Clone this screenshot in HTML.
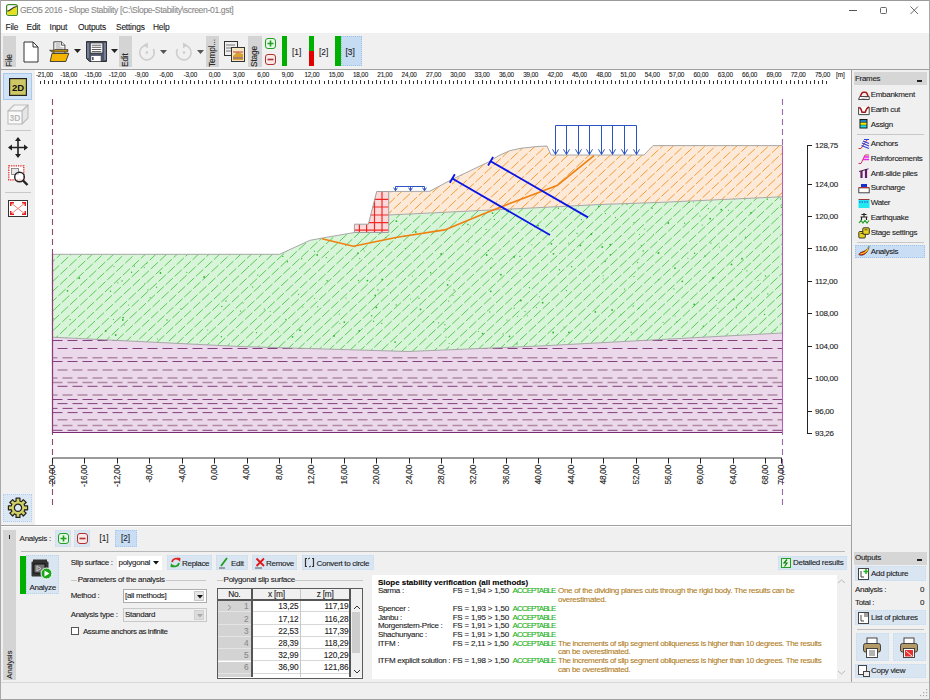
<!DOCTYPE html><html><head><meta charset="utf-8"><style>
html,body{margin:0;padding:0;}
body{width:930px;height:700px;overflow:hidden;position:relative;background:#f0f0f0;font-family:"Liberation Sans", sans-serif;}
.t{position:absolute;white-space:nowrap;line-height:1.2;-webkit-text-stroke:0.1px currentColor;}
.b{position:absolute;box-sizing:border-box;}
svg{position:absolute;overflow:visible;}

</style></head><body>
<div class="b" style="left:0px;top:0px;width:930px;height:33px;background:#fff;"></div>
<div class="b" style="left:0px;top:0px;width:930px;height:1px;background:#9a9a9a;"></div>
<svg style="left:5.5px;top:4px" width="12" height="12"><rect x="0.6" y="0.6" width="10.8" height="10.8" rx="2" fill="#fff" stroke="#3f8a2a" stroke-width="1.2"/><path d="M1.2 7 C4 7.5 6 3 10.8 2.5 V10.8 H1.2 Z" fill="#e4e020"/><path d="M1.2 7 C4 7.5 6 3 10.8 2.5" stroke="#333" fill="none" stroke-width="1.2"/></svg>
<div class="t" style="left:20px;top:5.3px;font-size:8.6px;color:#8a8a8a;letter-spacing:-0.35px;">GEO5 2016 - Slope Stability [C:\Slope-Stability\screen-01.gst]</div>
<div class="b" style="left:849px;top:10px;width:8px;height:1px;background:#555;"></div>
<div class="b" style="left:879.5px;top:6.5px;width:7.5px;height:7.5px;border:1px solid #666;border-radius:1.5px;"></div>
<svg style="left:910px;top:6px" width="9" height="9"><path d="M0.5 0.5 L8 8 M8 0.5 L0.5 8" stroke="#555" stroke-width="0.9"/></svg>
<div class="t" style="left:5.5px;top:22.3px;font-size:8.4px;color:#1a1a1a;letter-spacing:-0.2px;">File</div>
<div class="t" style="left:26.5px;top:22.3px;font-size:8.4px;color:#1a1a1a;letter-spacing:-0.2px;">Edit</div>
<div class="t" style="left:49.5px;top:22.3px;font-size:8.4px;color:#1a1a1a;letter-spacing:-0.2px;">Input</div>
<div class="t" style="left:78px;top:22.3px;font-size:8.4px;color:#1a1a1a;letter-spacing:-0.2px;">Outputs</div>
<div class="t" style="left:116px;top:22.3px;font-size:8.4px;color:#1a1a1a;letter-spacing:-0.2px;">Settings</div>
<div class="t" style="left:153px;top:22.3px;font-size:8.4px;color:#1a1a1a;letter-spacing:-0.2px;">Help</div>
<div class="b" style="left:0px;top:33px;width:930px;height:36px;background:#f0f0f0;"></div>
<div class="b" style="left:0px;top:69px;width:930px;height:1px;background:#a0a0a0;"></div>
<div class="b" style="left:3px;top:36px;width:13px;height:31px;background:#d4d4d4;"></div>
<div class="t" style="left:9.5px;top:67px;font-size:8.3px;color:#1a1a1a;letter-spacing:-0.15px;transform-origin:0 0;transform:rotate(-90deg) translate(0,-5px);">File</div>
<div class="b" style="left:119px;top:36px;width:13px;height:31px;background:#d4d4d4;"></div>
<div class="t" style="left:125.5px;top:67px;font-size:8.3px;color:#1a1a1a;letter-spacing:-0.15px;transform-origin:0 0;transform:rotate(-90deg) translate(0,-5px);">Edit</div>
<div class="b" style="left:206px;top:36px;width:13px;height:31px;background:#d4d4d4;"></div>
<div class="t" style="left:212.5px;top:67px;font-size:8.3px;color:#1a1a1a;letter-spacing:-0.15px;transform-origin:0 0;transform:rotate(-90deg) translate(0,-5px);">Templ...</div>
<div class="b" style="left:248px;top:36px;width:14px;height:31px;background:#d4d4d4;"></div>
<div class="t" style="left:255.0px;top:67px;font-size:8.3px;color:#1a1a1a;letter-spacing:-0.15px;transform-origin:0 0;transform:rotate(-90deg) translate(0,-5px);">Stage</div>
<svg style="left:23px;top:41px" width="16" height="22"><path d="M1 1 H10 L15 6 V21 H1 Z" fill="#fff" stroke="#333" stroke-width="1"/><path d="M10 1 V6 H15" fill="none" stroke="#333"/></svg>
<svg style="left:49px;top:41px" width="22" height="22"><path d="M4.8 0.8 H12.5 L15.9 4.2 V12.8 H4.8 Z" fill="#fff" stroke="#333" stroke-width="0.9"/><path d="M12.5 0.8 V4.2 H15.9" fill="#eee" stroke="#333" stroke-width="0.8"/><path d="M6.5 3h5M6.5 5h5M6.5 7h8M6.5 9h8" stroke="#999" stroke-width="1"/><path d="M0.6 9.3 H5 L6 8.6 H19 L18.5 11 H3 Z" fill="#c89000" stroke="#333" stroke-width="0.8"/><path d="M3 12.4 H19.8 L16.8 20.5 H1.2 Z" fill="#f5b400" stroke="#333" stroke-width="0.9"/></svg>
<svg style="left:74px;top:49px" width="7" height="5"><path d="M0 0 H7 L3.5 4 Z" fill="#222"/></svg>
<svg style="left:86px;top:41px" width="22" height="22"><path d="M0.5 0.5 H20.5 V20.5 H3.5 L0.5 17.5 Z" fill="#4d5566" stroke="#222" stroke-width="0.9"/><path d="M2 2v15M19 2v17" stroke="#8a96b4" stroke-width="1.3"/><rect x="4.3" y="2" width="12.5" height="10" fill="#fff" stroke="#222" stroke-width="0.6"/><path d="M5.8 4.2h9.5M5.8 6.3h9.5M5.8 8.5h9.5M5.8 10.6h9.5" stroke="#333" stroke-width="0.8"/><rect x="5.2" y="14.9" width="9.5" height="5.3" fill="#fff"/><rect x="6" y="16" width="1.6" height="3" fill="#4d5566"/></svg>
<svg style="left:111px;top:49px" width="7" height="5"><path d="M0 0 H7 L3.5 4 Z" fill="#222"/></svg>
<svg style="left:138px;top:42px" width="20" height="20"><path d="M9.2 3.3 A7.3 7.3 0 1 0 15.3 7" fill="none" stroke="#cdcdcd" stroke-width="1.6"/><path d="M5 3.3 L9.8 0.4 L9.8 6.2 Z" fill="#cdcdcd"/><circle cx="8.8" cy="10.6" r="1.3" fill="#cdcdcd"/></svg>
<svg style="left:160px;top:50px" width="7" height="5"><path d="M0 0 H7 L3.5 4 Z" fill="#555"/></svg>
<svg style="left:175px;top:42px" width="20" height="20"><path d="M8.6 3.3 A7.3 7.3 0 1 1 2.5 7" fill="none" stroke="#cdcdcd" stroke-width="1.6"/><path d="M12.8 3.3 L8 0.4 L8 6.2 Z" fill="#cdcdcd"/><circle cx="9" cy="10.6" r="1.3" fill="#cdcdcd"/></svg>
<svg style="left:197px;top:50px" width="7" height="5"><path d="M0 0 H7 L3.5 4 Z" fill="#555"/></svg>
<svg style="left:224px;top:41px" width="22" height="22"><rect x="0.5" y="0.5" width="13" height="14" fill="#eee" stroke="#333"/><path d="M2 4h9M2 7h9M2 10h6" stroke="#777"/><rect x="7.5" y="6.5" width="13" height="14" fill="#f4e6c0" stroke="#333"/><path d="M9 15 L13 11 L19 13 V19 H9 Z" fill="#d8a030"/><path d="M9 11h10" stroke="#c04040"/><path d="M9 17h10" stroke="#8060a0"/></svg>
<svg style="left:265px;top:38px" width="11" height="11"><rect x="0.5" y="0.5" width="10" height="10" rx="2.5" fill="#e8f8e8" stroke="#20a020"/><path d="M5.5 2.5v6M2.5 5.5h6" stroke="#20a020" stroke-width="1.6"/></svg>
<svg style="left:265px;top:54px" width="11" height="11"><rect x="0.5" y="0.5" width="10" height="10" rx="2.5" fill="#f8e8e8" stroke="#b03030"/><path d="M2.5 5.5h6" stroke="#b03030" stroke-width="1.6"/></svg>
<div class="b" style="left:282px;top:36px;width:5px;height:30px;background:#00b000;"></div>
<div class="t" style="left:292px;top:46.5px;font-size:8.4px;color:#222;letter-spacing:0px;">[1]</div>
<div class="b" style="left:309px;top:36px;width:5px;height:15px;background:#00b000;"></div>
<div class="b" style="left:309px;top:51px;width:5px;height:15px;background:#e00000;"></div>
<div class="t" style="left:319px;top:46.5px;font-size:8.4px;color:#222;letter-spacing:0px;">[2]</div>
<div class="b" style="left:341px;top:36px;width:21px;height:30px;background:#c5dcf2;border:1px dotted #9cc2ea;"></div>
<div class="b" style="left:335px;top:36px;width:6px;height:30px;background:#00b000;"></div>
<div class="t" style="left:345.5px;top:46.5px;font-size:8.4px;color:#222;letter-spacing:0px;">[3]</div>
<div class="b" style="left:0px;top:70px;width:35px;height:455px;background:#f0f0f0;"></div>
<div class="b" style="left:3px;top:73px;width:29px;height:27px;background:#cfe2f6;border:1px solid #a8c8ec;"></div>
<svg style="left:9px;top:77.5px" width="18" height="18"><rect x="0.6" y="0.6" width="16.8" height="16.8" fill="#cdc865" stroke="#222" stroke-width="1.2"/><text x="9" y="12.8" text-anchor="middle" font-family="Liberation Sans" font-weight="bold" font-size="9.5" fill="#111">2D</text></svg>
<svg style="left:7px;top:104px" width="23" height="21"><path d="M1 7 L7 1 H21 L15 7 Z" fill="#f4f4f4" stroke="#bdbdbd" stroke-width="1.1" stroke-linejoin="round"/><path d="M15 7 L21 1 V14 L15 20 Z" fill="#e6e6e6" stroke="#bdbdbd" stroke-width="1.1" stroke-linejoin="round"/><rect x="1" y="7" width="14" height="13" fill="#fafafa" stroke="#bdbdbd" stroke-width="1.1"/><text x="8" y="17.2" text-anchor="middle" font-family="Liberation Sans" font-weight="bold" font-size="8.5" fill="#b8b8b8">3D</text></svg>
<div class="b" style="left:5px;top:130px;width:26px;height:1px;background:#c8c8c8;"></div>
<svg style="left:8px;top:137px" width="20" height="21"><path d="M10 1 V20 M1 10.5 H19" stroke="#222" stroke-width="1.6"/><path d="M10 0 L7 4 H13 Z M10 21 L7 17 H13 Z M0 10.5 L4 7.5 V13.5 Z M20 10.5 L16 7.5 V13.5 Z" fill="#222"/></svg>
<svg style="left:8px;top:165px" width="21" height="22"><rect x="0.8" y="0.8" width="15" height="14" fill="#fff" stroke="#e02020" stroke-width="1.3" stroke-dasharray="1.3 1"/><rect x="3.5" y="3.5" width="7" height="6" fill="#e8e8e8" stroke="#777" stroke-width="0.8"/><circle cx="11.5" cy="12" r="4.8" fill="#fff" fill-opacity="0.6" stroke="#222" stroke-width="1.4"/><path d="M15 15.5 L19.5 20" stroke="#222" stroke-width="2.4"/></svg>
<div class="b" style="left:5px;top:192px;width:26px;height:1px;background:#c8c8c8;"></div>
<svg style="left:8px;top:200px" width="20" height="17"><rect x="0.5" y="0.5" width="19" height="16" fill="#fff" stroke="#333"/><path d="M3 3 L17 14 M17 3 L3 14" stroke="#f08080" stroke-width="1"/><path d="M2 2h4v1.5h-2.5v2.5h-1.5z M18 2h-4v1.5h2.5v2.5h1.5z M2 15h4v-1.5h-2.5v-2.5h-1.5z M18 15h-4v-1.5h2.5v-2.5h1.5z" fill="#e02020"/></svg>
<div class="b" style="left:3px;top:494px;width:29px;height:28px;background:#dbe7f3;border:1px dotted #b0d0f0;"></div>
<svg style="left:0;top:0" width="40" height="530"><path d="M24.7 505.9 L27.6 505.8 L27.6 509.8 L24.7 509.7 L24.5 510.5 L24.1 511.3 L26.2 513.1 L23.3 516.0 L21.5 513.9 L20.7 514.3 L19.9 514.5 L20.0 517.4 L16.0 517.4 L16.1 514.5 L15.3 514.3 L14.5 513.9 L12.7 516.0 L9.8 513.1 L11.9 511.3 L11.5 510.5 L11.3 509.7 L8.4 509.8 L8.4 505.8 L11.3 505.9 L11.5 505.1 L11.9 504.3 L9.8 502.5 L12.7 499.6 L14.5 501.7 L15.3 501.3 L16.1 501.1 L16.0 498.2 L20.0 498.2 L19.9 501.1 L20.7 501.3 L21.5 501.7 L23.3 499.6 L26.2 502.5 L24.1 504.3 L24.5 505.1 Z M21.6 507.8 A3.6 3.6 0 1 0 14.4 507.8 A3.6 3.6 0 1 0 21.6 507.8 Z" fill="#d2d064" stroke="#222" stroke-width="1.2" stroke-linejoin="round" fill-rule="evenodd"/></svg>
<div class="b" style="left:35px;top:70px;width:816px;height:455px;background:#fff;"></div>
<div class="b" style="left:851px;top:70px;width:1px;height:612px;background:#a0a0a0;"></div>
<svg style="left:0;top:0" width="930" height="700">
<defs><pattern id="pg" patternUnits="userSpaceOnUse" width="12" height="39.50" patternTransform="rotate(-46)"><rect x="-1" y="-1" width="14" height="41.50" fill="#d9f5d9"/><path d="M-12.00 3.95H-2.70M0.00 3.95H9.30M-7.50 11.85H1.80M4.50 11.85H13.80M-2.20 19.75H7.10M9.80 19.75H19.10M-5.50 27.65H3.80M6.50 27.65H15.80M-10.00 35.55H-0.70M2.00 35.55H11.30" stroke="#5ecf5e" stroke-width="1.0"/></pattern><pattern id="po" patternUnits="userSpaceOnUse" width="12" height="39.50" patternTransform="rotate(-46)"><rect x="-1" y="-1" width="14" height="41.50" fill="#fde9d7"/><path d="M-12.00 3.95H-2.70M0.00 3.95H9.30M-7.50 11.85H1.80M4.50 11.85H13.80M-2.20 19.75H7.10M9.80 19.75H19.10M-5.50 27.65H3.80M6.50 27.65H15.80M-10.00 35.55H-0.70M2.00 35.55H11.30" stroke="#f39c3c" stroke-width="1.0"/></pattern><pattern id="pd" patternUnits="userSpaceOnUse" width="60" height="48"><circle cx="14.3" cy="26.1" r="0.9" fill="#28b828"/><circle cx="55.0" cy="22.8" r="1.1" fill="#28b828"/><circle cx="3.9" cy="0.6" r="0.9" fill="#28b828"/><circle cx="15.6" cy="11.2" r="1.1" fill="#28b828"/><circle cx="28.2" cy="40.2" r="0.9" fill="#28b828"/><circle cx="23.8" cy="41.3" r="0.7" fill="#28b828"/><circle cx="38.1" cy="41.7" r="1.1" fill="#28b828"/><circle cx="23.4" cy="0.7" r="0.7" fill="#28b828"/><circle cx="9.6" cy="46.0" r="0.7" fill="#28b828"/></pattern></defs>
<clipPath id="cg"><polygon points="52.5,254.3 279.6,254.3 309.7,240.4 322.5,238.0 354.4,232.5 388.7,232.5 388.7,215.0 422.0,213.4 520.0,208.6 600.0,204.5 660.0,202.4 782.0,196.8 782.0,432.5 52.5,432.5"/></clipPath>
<polygon points="52.5,254.3 279.6,254.3 309.7,240.4 322.5,238.0 354.4,232.5 388.7,232.5 388.7,215.0 422.0,213.4 520.0,208.6 600.0,204.5 660.0,202.4 782.0,196.8 782.0,432.5 52.5,432.5" fill="#d9f5d9"/>
<g clip-path="url(#cg)" stroke="#58ca58" stroke-width="1.0" stroke-dasharray="10 2.3" fill="none">
<line x1="-206.9" y1="434.5" x2="50.2" y2="194.8" stroke-dashoffset="9.1"/>
<line x1="-196.3" y1="434.5" x2="60.8" y2="194.8" stroke-dashoffset="9.8"/>
<line x1="-185.7" y1="434.5" x2="71.4" y2="194.8" stroke-dashoffset="11.6"/>
<line x1="-175.1" y1="434.5" x2="82.0" y2="194.8" stroke-dashoffset="9.1"/>
<line x1="-164.5" y1="434.5" x2="92.6" y2="194.8" stroke-dashoffset="11.3"/>
<line x1="-153.9" y1="434.5" x2="103.2" y2="194.8" stroke-dashoffset="0.4"/>
<line x1="-143.3" y1="434.5" x2="113.8" y2="194.8" stroke-dashoffset="5.7"/>
<line x1="-132.7" y1="434.5" x2="124.4" y2="194.8" stroke-dashoffset="11.6"/>
<line x1="-122.1" y1="434.5" x2="135.0" y2="194.8" stroke-dashoffset="8.0"/>
<line x1="-111.5" y1="434.5" x2="145.6" y2="194.8" stroke-dashoffset="11.1"/>
<line x1="-100.9" y1="434.5" x2="156.2" y2="194.8" stroke-dashoffset="1.4"/>
<line x1="-90.3" y1="434.5" x2="166.8" y2="194.8" stroke-dashoffset="5.8"/>
<line x1="-79.7" y1="434.5" x2="177.4" y2="194.8" stroke-dashoffset="3.0"/>
<line x1="-69.1" y1="434.5" x2="188.0" y2="194.8" stroke-dashoffset="6.7"/>
<line x1="-58.5" y1="434.5" x2="198.6" y2="194.8" stroke-dashoffset="7.1"/>
<line x1="-47.9" y1="434.5" x2="209.2" y2="194.8" stroke-dashoffset="0.2"/>
<line x1="-37.3" y1="434.5" x2="219.8" y2="194.8" stroke-dashoffset="2.7"/>
<line x1="-26.7" y1="434.5" x2="230.4" y2="194.8" stroke-dashoffset="3.4"/>
<line x1="-16.1" y1="434.5" x2="241.0" y2="194.8" stroke-dashoffset="11.3"/>
<line x1="-5.5" y1="434.5" x2="251.6" y2="194.8" stroke-dashoffset="9.4"/>
<line x1="5.1" y1="434.5" x2="262.2" y2="194.8" stroke-dashoffset="2.0"/>
<line x1="15.7" y1="434.5" x2="272.8" y2="194.8" stroke-dashoffset="9.8"/>
<line x1="26.3" y1="434.5" x2="283.4" y2="194.8" stroke-dashoffset="1.7"/>
<line x1="36.9" y1="434.5" x2="294.0" y2="194.8" stroke-dashoffset="7.6"/>
<line x1="47.5" y1="434.5" x2="304.6" y2="194.8" stroke-dashoffset="1.6"/>
<line x1="58.1" y1="434.5" x2="315.2" y2="194.8" stroke-dashoffset="0.0"/>
<line x1="68.7" y1="434.5" x2="325.8" y2="194.8" stroke-dashoffset="10.7"/>
<line x1="79.3" y1="434.5" x2="336.4" y2="194.8" stroke-dashoffset="2.6"/>
<line x1="89.9" y1="434.5" x2="347.0" y2="194.8" stroke-dashoffset="2.7"/>
<line x1="100.5" y1="434.5" x2="357.6" y2="194.8" stroke-dashoffset="12.1"/>
<line x1="111.1" y1="434.5" x2="368.2" y2="194.8" stroke-dashoffset="10.7"/>
<line x1="121.7" y1="434.5" x2="378.8" y2="194.8" stroke-dashoffset="3.6"/>
<line x1="132.3" y1="434.5" x2="389.4" y2="194.8" stroke-dashoffset="11.8"/>
<line x1="142.9" y1="434.5" x2="400.0" y2="194.8" stroke-dashoffset="6.6"/>
<line x1="153.5" y1="434.5" x2="410.6" y2="194.8" stroke-dashoffset="8.3"/>
<line x1="164.1" y1="434.5" x2="421.2" y2="194.8" stroke-dashoffset="2.5"/>
<line x1="174.7" y1="434.5" x2="431.8" y2="194.8" stroke-dashoffset="11.6"/>
<line x1="185.3" y1="434.5" x2="442.4" y2="194.8" stroke-dashoffset="8.5"/>
<line x1="195.9" y1="434.5" x2="453.0" y2="194.8" stroke-dashoffset="11.9"/>
<line x1="206.5" y1="434.5" x2="463.6" y2="194.8" stroke-dashoffset="11.0"/>
<line x1="217.1" y1="434.5" x2="474.2" y2="194.8" stroke-dashoffset="3.7"/>
<line x1="227.7" y1="434.5" x2="484.8" y2="194.8" stroke-dashoffset="4.4"/>
<line x1="238.3" y1="434.5" x2="495.4" y2="194.8" stroke-dashoffset="2.0"/>
<line x1="248.9" y1="434.5" x2="506.0" y2="194.8" stroke-dashoffset="1.8"/>
<line x1="259.5" y1="434.5" x2="516.6" y2="194.8" stroke-dashoffset="0.8"/>
<line x1="270.1" y1="434.5" x2="527.2" y2="194.8" stroke-dashoffset="3.7"/>
<line x1="280.7" y1="434.5" x2="537.8" y2="194.8" stroke-dashoffset="7.4"/>
<line x1="291.3" y1="434.5" x2="548.4" y2="194.8" stroke-dashoffset="0.0"/>
<line x1="301.9" y1="434.5" x2="559.0" y2="194.8" stroke-dashoffset="8.3"/>
<line x1="312.5" y1="434.5" x2="569.6" y2="194.8" stroke-dashoffset="4.2"/>
<line x1="323.1" y1="434.5" x2="580.2" y2="194.8" stroke-dashoffset="3.8"/>
<line x1="333.7" y1="434.5" x2="590.8" y2="194.8" stroke-dashoffset="10.1"/>
<line x1="344.3" y1="434.5" x2="601.4" y2="194.8" stroke-dashoffset="5.9"/>
<line x1="354.9" y1="434.5" x2="612.0" y2="194.8" stroke-dashoffset="3.9"/>
<line x1="365.5" y1="434.5" x2="622.6" y2="194.8" stroke-dashoffset="5.9"/>
<line x1="376.1" y1="434.5" x2="633.2" y2="194.8" stroke-dashoffset="8.7"/>
<line x1="386.7" y1="434.5" x2="643.8" y2="194.8" stroke-dashoffset="0.7"/>
<line x1="397.3" y1="434.5" x2="654.4" y2="194.8" stroke-dashoffset="12.0"/>
<line x1="407.9" y1="434.5" x2="665.0" y2="194.8" stroke-dashoffset="0.3"/>
<line x1="418.5" y1="434.5" x2="675.6" y2="194.8" stroke-dashoffset="9.2"/>
<line x1="429.1" y1="434.5" x2="686.2" y2="194.8" stroke-dashoffset="10.4"/>
<line x1="439.7" y1="434.5" x2="696.8" y2="194.8" stroke-dashoffset="0.2"/>
<line x1="450.3" y1="434.5" x2="707.4" y2="194.8" stroke-dashoffset="9.7"/>
<line x1="460.9" y1="434.5" x2="718.0" y2="194.8" stroke-dashoffset="4.5"/>
<line x1="471.5" y1="434.5" x2="728.6" y2="194.8" stroke-dashoffset="7.1"/>
<line x1="482.1" y1="434.5" x2="739.2" y2="194.8" stroke-dashoffset="0.1"/>
<line x1="492.7" y1="434.5" x2="749.8" y2="194.8" stroke-dashoffset="0.6"/>
<line x1="503.3" y1="434.5" x2="760.4" y2="194.8" stroke-dashoffset="2.2"/>
<line x1="513.9" y1="434.5" x2="771.0" y2="194.8" stroke-dashoffset="11.7"/>
<line x1="524.5" y1="434.5" x2="781.6" y2="194.8" stroke-dashoffset="2.4"/>
<line x1="535.1" y1="434.5" x2="792.2" y2="194.8" stroke-dashoffset="9.3"/>
<line x1="545.7" y1="434.5" x2="802.8" y2="194.8" stroke-dashoffset="11.4"/>
<line x1="556.3" y1="434.5" x2="813.4" y2="194.8" stroke-dashoffset="11.6"/>
<line x1="566.9" y1="434.5" x2="824.0" y2="194.8" stroke-dashoffset="4.2"/>
<line x1="577.5" y1="434.5" x2="834.6" y2="194.8" stroke-dashoffset="4.4"/>
<line x1="588.1" y1="434.5" x2="845.2" y2="194.8" stroke-dashoffset="6.5"/>
<line x1="598.7" y1="434.5" x2="855.8" y2="194.8" stroke-dashoffset="9.5"/>
<line x1="609.3" y1="434.5" x2="866.4" y2="194.8" stroke-dashoffset="1.3"/>
<line x1="619.9" y1="434.5" x2="877.0" y2="194.8" stroke-dashoffset="9.2"/>
<line x1="630.5" y1="434.5" x2="887.6" y2="194.8" stroke-dashoffset="9.8"/>
<line x1="641.1" y1="434.5" x2="898.2" y2="194.8" stroke-dashoffset="10.6"/>
<line x1="651.7" y1="434.5" x2="908.8" y2="194.8" stroke-dashoffset="0.5"/>
<line x1="662.3" y1="434.5" x2="919.4" y2="194.8" stroke-dashoffset="11.6"/>
<line x1="672.9" y1="434.5" x2="930.0" y2="194.8" stroke-dashoffset="1.1"/>
<line x1="683.5" y1="434.5" x2="940.6" y2="194.8" stroke-dashoffset="4.2"/>
<line x1="694.1" y1="434.5" x2="951.2" y2="194.8" stroke-dashoffset="7.5"/>
<line x1="704.7" y1="434.5" x2="961.8" y2="194.8" stroke-dashoffset="11.3"/>
<line x1="715.3" y1="434.5" x2="972.4" y2="194.8" stroke-dashoffset="4.2"/>
<line x1="725.9" y1="434.5" x2="983.0" y2="194.8" stroke-dashoffset="11.4"/>
<line x1="736.5" y1="434.5" x2="993.6" y2="194.8" stroke-dashoffset="6.7"/>
<line x1="747.1" y1="434.5" x2="1004.2" y2="194.8" stroke-dashoffset="3.8"/>
<line x1="757.7" y1="434.5" x2="1014.8" y2="194.8" stroke-dashoffset="3.9"/>
<line x1="768.3" y1="434.5" x2="1025.4" y2="194.8" stroke-dashoffset="2.2"/>
<line x1="778.9" y1="434.5" x2="1036.0" y2="194.8" stroke-dashoffset="1.0"/>
<line x1="789.5" y1="434.5" x2="1046.6" y2="194.8" stroke-dashoffset="1.8"/>
</g>
<g clip-path="url(#cg)" fill="#2cb82c">
<circle cx="382.2" cy="279.4" r="0.9"/>
<circle cx="381.8" cy="323.4" r="0.6"/>
<circle cx="186.8" cy="272.3" r="0.6"/>
<circle cx="120.7" cy="241.2" r="0.5"/>
<circle cx="445.2" cy="328.7" r="0.5"/>
<circle cx="486.7" cy="255.0" r="0.9"/>
<circle cx="529.4" cy="287.7" r="0.6"/>
<circle cx="506.9" cy="319.9" r="0.5"/>
<circle cx="95.5" cy="224.3" r="0.6"/>
<circle cx="489.7" cy="311.9" r="0.7"/>
<circle cx="373.6" cy="321.5" r="0.6"/>
<circle cx="519.4" cy="270.5" r="0.5"/>
<circle cx="385.9" cy="237.4" r="0.5"/>
<circle cx="568.7" cy="243.0" r="0.6"/>
<circle cx="426.4" cy="200.4" r="0.5"/>
<circle cx="344.3" cy="322.1" r="0.9"/>
<circle cx="100.8" cy="198.5" r="0.5"/>
<circle cx="207.9" cy="334.1" r="0.5"/>
<circle cx="395.1" cy="342.1" r="0.9"/>
<circle cx="358.4" cy="280.4" r="0.6"/>
<circle cx="620.3" cy="236.2" r="0.5"/>
<circle cx="279.2" cy="198.3" r="0.9"/>
<circle cx="605.4" cy="213.6" r="0.6"/>
<circle cx="568.1" cy="197.6" r="0.9"/>
<circle cx="633.8" cy="222.5" r="0.6"/>
<circle cx="378.6" cy="224.4" r="0.6"/>
<circle cx="358.0" cy="253.2" r="0.9"/>
<circle cx="359.2" cy="227.7" r="0.7"/>
<circle cx="683.0" cy="341.3" r="0.7"/>
<circle cx="780.5" cy="198.9" r="0.6"/>
<circle cx="339.8" cy="323.3" r="0.5"/>
<circle cx="82.7" cy="217.8" r="0.9"/>
<circle cx="240.5" cy="311.1" r="0.7"/>
<circle cx="658.1" cy="253.5" r="0.5"/>
<circle cx="117.8" cy="282.8" r="0.6"/>
<circle cx="63.3" cy="250.9" r="0.9"/>
<circle cx="144.9" cy="283.5" r="0.6"/>
<circle cx="684.6" cy="223.2" r="0.6"/>
<circle cx="278.9" cy="230.0" r="0.6"/>
<circle cx="581.5" cy="219.6" r="0.6"/>
<circle cx="553.5" cy="253.8" r="0.9"/>
<circle cx="492.6" cy="258.8" r="0.5"/>
<circle cx="131.6" cy="272.3" r="0.7"/>
<circle cx="226.0" cy="301.0" r="0.7"/>
<circle cx="359.2" cy="330.8" r="0.9"/>
<circle cx="266.2" cy="222.1" r="0.5"/>
<circle cx="144.3" cy="267.4" r="0.5"/>
<circle cx="256.6" cy="332.7" r="0.6"/>
<circle cx="598.8" cy="206.3" r="0.9"/>
<circle cx="377.4" cy="205.0" r="0.6"/>
<circle cx="257.8" cy="275.1" r="0.6"/>
<circle cx="119.3" cy="216.6" r="0.9"/>
<circle cx="767.8" cy="293.9" r="0.6"/>
<circle cx="482.6" cy="333.6" r="0.9"/>
<circle cx="716.5" cy="300.4" r="0.5"/>
<circle cx="67.5" cy="290.8" r="0.9"/>
<circle cx="101.1" cy="242.3" r="0.6"/>
<circle cx="781.5" cy="207.2" r="0.7"/>
<circle cx="590.0" cy="330.1" r="0.6"/>
<circle cx="631.1" cy="332.3" r="0.7"/>
<circle cx="114.0" cy="266.5" r="0.5"/>
<circle cx="687.9" cy="258.2" r="0.5"/>
<circle cx="682.3" cy="281.3" r="0.9"/>
<circle cx="328.8" cy="197.9" r="0.5"/>
<circle cx="110.5" cy="291.3" r="0.7"/>
<circle cx="694.2" cy="304.5" r="0.9"/>
<circle cx="734.0" cy="299.4" r="0.9"/>
<circle cx="373.6" cy="320.9" r="0.5"/>
<circle cx="430.6" cy="272.7" r="0.7"/>
<circle cx="490.9" cy="267.7" r="0.6"/>
<circle cx="750.9" cy="212.8" r="0.9"/>
<circle cx="238.8" cy="197.7" r="0.7"/>
<circle cx="156.6" cy="287.2" r="0.6"/>
<circle cx="602.3" cy="247.0" r="0.9"/>
<circle cx="415.8" cy="232.0" r="0.9"/>
<circle cx="538.1" cy="225.6" r="0.9"/>
<circle cx="638.7" cy="308.4" r="0.6"/>
<circle cx="694.6" cy="253.3" r="0.7"/>
<circle cx="205.2" cy="216.0" r="0.7"/>
<circle cx="663.1" cy="322.5" r="0.5"/>
<circle cx="745.5" cy="237.2" r="0.6"/>
<circle cx="134.4" cy="266.2" r="0.6"/>
<circle cx="658.6" cy="253.0" r="0.9"/>
<circle cx="542.7" cy="302.7" r="0.9"/>
<circle cx="285.9" cy="319.5" r="0.7"/>
<circle cx="689.2" cy="202.2" r="0.7"/>
<circle cx="468.5" cy="242.0" r="0.5"/>
<circle cx="519.9" cy="256.4" r="0.6"/>
<circle cx="70.1" cy="319.6" r="0.6"/>
<circle cx="620.9" cy="314.7" r="0.5"/>
<circle cx="377.9" cy="289.9" r="0.7"/>
<circle cx="751.7" cy="298.0" r="0.6"/>
<circle cx="653.4" cy="234.2" r="0.5"/>
<circle cx="603.2" cy="275.7" r="0.5"/>
<circle cx="182.7" cy="236.6" r="0.7"/>
<circle cx="446.0" cy="337.1" r="0.6"/>
<circle cx="339.3" cy="314.0" r="0.6"/>
<circle cx="115.7" cy="335.0" r="0.9"/>
<circle cx="146.8" cy="263.6" r="0.5"/>
<circle cx="327.1" cy="280.8" r="0.7"/>
<circle cx="390.5" cy="293.0" r="0.6"/>
<circle cx="124.2" cy="325.1" r="0.5"/>
<circle cx="207.7" cy="330.1" r="0.5"/>
<circle cx="765.5" cy="276.0" r="0.7"/>
<circle cx="243.2" cy="303.0" r="0.5"/>
<circle cx="306.4" cy="208.3" r="0.9"/>
<circle cx="301.7" cy="258.8" r="0.7"/>
<circle cx="407.8" cy="200.2" r="0.5"/>
<circle cx="365.1" cy="201.2" r="0.7"/>
<circle cx="553.2" cy="332.5" r="0.9"/>
<circle cx="160.5" cy="273.0" r="0.9"/>
<circle cx="742.4" cy="269.4" r="0.5"/>
<circle cx="605.2" cy="261.5" r="0.7"/>
<circle cx="658.7" cy="279.7" r="0.6"/>
<circle cx="433.6" cy="321.7" r="0.7"/>
<circle cx="279.5" cy="252.8" r="0.6"/>
<circle cx="274.3" cy="217.0" r="0.7"/>
<circle cx="470.3" cy="225.9" r="0.5"/>
<circle cx="419.3" cy="286.2" r="0.5"/>
<circle cx="445.0" cy="202.5" r="0.9"/>
<circle cx="449.1" cy="343.4" r="0.5"/>
<circle cx="410.5" cy="299.0" r="0.5"/>
<circle cx="731.5" cy="264.4" r="0.9"/>
<circle cx="248.5" cy="266.5" r="0.6"/>
<circle cx="300.0" cy="330.2" r="0.9"/>
<circle cx="435.2" cy="212.2" r="0.9"/>
<circle cx="503.1" cy="333.9" r="0.6"/>
<circle cx="564.5" cy="341.6" r="0.5"/>
<circle cx="193.7" cy="229.9" r="0.7"/>
<circle cx="287.1" cy="248.9" r="0.9"/>
<circle cx="128.6" cy="304.9" r="0.5"/>
<circle cx="673.9" cy="288.9" r="0.6"/>
<circle cx="564.0" cy="326.9" r="0.5"/>
<circle cx="326.3" cy="257.6" r="0.6"/>
<circle cx="444.9" cy="324.7" r="0.6"/>
<circle cx="438.6" cy="322.8" r="0.6"/>
<circle cx="221.8" cy="306.4" r="0.7"/>
<circle cx="711.0" cy="243.1" r="0.7"/>
<circle cx="702.2" cy="225.0" r="0.6"/>
<circle cx="699.9" cy="216.0" r="0.6"/>
<circle cx="148.8" cy="209.1" r="0.9"/>
<circle cx="122.8" cy="320.0" r="0.9"/>
<circle cx="448.6" cy="301.0" r="0.6"/>
<circle cx="346.0" cy="298.1" r="0.5"/>
<circle cx="122.1" cy="280.9" r="0.7"/>
<circle cx="717.3" cy="340.3" r="0.5"/>
<circle cx="566.4" cy="290.6" r="0.7"/>
<circle cx="419.0" cy="298.2" r="0.6"/>
<circle cx="638.1" cy="267.8" r="0.5"/>
<circle cx="79.3" cy="278.2" r="0.9"/>
<circle cx="159.0" cy="223.5" r="0.6"/>
<circle cx="177.9" cy="219.5" r="0.7"/>
<circle cx="728.6" cy="210.2" r="0.5"/>
<circle cx="150.1" cy="297.5" r="0.5"/>
<circle cx="610.2" cy="244.7" r="0.9"/>
<circle cx="363.3" cy="248.8" r="0.6"/>
<circle cx="490.7" cy="198.0" r="0.5"/>
<circle cx="668.3" cy="223.0" r="0.9"/>
<circle cx="314.5" cy="251.2" r="0.6"/>
<circle cx="493.6" cy="210.1" r="0.5"/>
<circle cx="288.3" cy="208.6" r="0.9"/>
<circle cx="467.9" cy="224.5" r="0.7"/>
<circle cx="639.5" cy="234.5" r="0.5"/>
<circle cx="595.4" cy="311.9" r="0.9"/>
<circle cx="149.2" cy="245.2" r="0.7"/>
<circle cx="612.1" cy="310.0" r="0.9"/>
<circle cx="203.0" cy="223.5" r="0.7"/>
<circle cx="272.2" cy="211.0" r="0.7"/>
<circle cx="775.1" cy="330.5" r="0.5"/>
<circle cx="221.4" cy="336.8" r="0.7"/>
<circle cx="298.6" cy="294.3" r="0.6"/>
<circle cx="441.1" cy="254.0" r="0.9"/>
<circle cx="520.9" cy="300.5" r="0.9"/>
<circle cx="767.5" cy="199.4" r="0.5"/>
<circle cx="591.3" cy="234.2" r="0.9"/>
<circle cx="420.5" cy="309.4" r="0.9"/>
<circle cx="59.9" cy="234.5" r="0.7"/>
<circle cx="713.1" cy="278.0" r="0.9"/>
<circle cx="758.0" cy="280.6" r="0.5"/>
<circle cx="517.7" cy="316.6" r="0.5"/>
<circle cx="453.1" cy="295.6" r="0.5"/>
<circle cx="334.1" cy="335.9" r="0.9"/>
<circle cx="396.4" cy="221.2" r="0.9"/>
<circle cx="447.6" cy="284.9" r="0.9"/>
<circle cx="742.0" cy="258.7" r="0.9"/>
<circle cx="488.4" cy="250.5" r="0.7"/>
<circle cx="404.8" cy="236.2" r="0.7"/>
<circle cx="536.4" cy="307.4" r="0.5"/>
<circle cx="62.2" cy="232.5" r="0.5"/>
<circle cx="514.1" cy="256.9" r="0.9"/>
<circle cx="90.5" cy="243.0" r="0.9"/>
<circle cx="88.6" cy="343.3" r="0.7"/>
<circle cx="105.7" cy="330.9" r="0.9"/>
<circle cx="577.0" cy="233.4" r="0.6"/>
<circle cx="85.2" cy="210.7" r="0.9"/>
<circle cx="157.4" cy="339.0" r="0.6"/>
<circle cx="492.6" cy="213.1" r="0.9"/>
<circle cx="384.7" cy="226.3" r="0.5"/>
<circle cx="312.4" cy="219.1" r="0.7"/>
<circle cx="375.3" cy="295.5" r="0.9"/>
<circle cx="490.8" cy="291.3" r="0.9"/>
<circle cx="317.7" cy="306.8" r="0.6"/>
<circle cx="747.4" cy="305.4" r="0.6"/>
<circle cx="403.2" cy="270.9" r="0.7"/>
<circle cx="624.5" cy="289.1" r="0.7"/>
<circle cx="252.6" cy="286.9" r="0.6"/>
<circle cx="514.2" cy="308.2" r="0.6"/>
<circle cx="746.9" cy="270.8" r="0.6"/>
<circle cx="693.5" cy="201.9" r="0.5"/>
<circle cx="58.9" cy="234.7" r="0.5"/>
<circle cx="507.0" cy="211.3" r="0.7"/>
<circle cx="104.9" cy="208.9" r="0.6"/>
<circle cx="454.0" cy="290.0" r="0.7"/>
<circle cx="405.3" cy="248.8" r="0.7"/>
<circle cx="302.9" cy="307.0" r="0.5"/>
<circle cx="637.6" cy="262.6" r="0.6"/>
<circle cx="376.4" cy="307.4" r="0.9"/>
<circle cx="643.2" cy="251.0" r="0.7"/>
<circle cx="264.3" cy="309.1" r="0.6"/>
<circle cx="364.2" cy="251.0" r="0.5"/>
<circle cx="389.3" cy="244.3" r="0.5"/>
<circle cx="367.4" cy="280.6" r="0.9"/>
<circle cx="270.2" cy="311.5" r="0.5"/>
<circle cx="278.4" cy="331.7" r="0.5"/>
<circle cx="559.4" cy="269.7" r="0.7"/>
<circle cx="258.5" cy="217.3" r="0.7"/>
<circle cx="531.8" cy="244.7" r="0.5"/>
<circle cx="287.4" cy="261.7" r="0.7"/>
<circle cx="371.7" cy="315.7" r="0.7"/>
<circle cx="386.5" cy="229.0" r="0.6"/>
<circle cx="113.5" cy="319.5" r="0.5"/>
<circle cx="317.2" cy="254.9" r="0.9"/>
<circle cx="633.2" cy="306.1" r="0.7"/>
<circle cx="633.9" cy="276.5" r="0.6"/>
<circle cx="180.9" cy="309.1" r="0.7"/>
<circle cx="644.7" cy="229.0" r="0.5"/>
<circle cx="449.2" cy="280.6" r="0.5"/>
<circle cx="527.4" cy="315.8" r="0.5"/>
<circle cx="476.8" cy="241.5" r="0.5"/>
<circle cx="296.2" cy="236.8" r="0.5"/>
<circle cx="708.3" cy="208.6" r="0.6"/>
<circle cx="123.1" cy="317.6" r="0.9"/>
<circle cx="231.2" cy="228.8" r="0.7"/>
<circle cx="610.2" cy="254.8" r="0.7"/>
<circle cx="641.3" cy="245.6" r="0.6"/>
<circle cx="412.4" cy="276.1" r="0.5"/>
<circle cx="568.9" cy="332.3" r="0.9"/>
<circle cx="604.6" cy="342.9" r="0.7"/>
<circle cx="675.1" cy="316.1" r="0.5"/>
<circle cx="700.7" cy="338.7" r="0.5"/>
<circle cx="434.4" cy="301.8" r="0.5"/>
<circle cx="359.8" cy="258.6" r="0.6"/>
<circle cx="231.4" cy="220.2" r="0.9"/>
<circle cx="551.4" cy="243.8" r="0.9"/>
<circle cx="362.2" cy="239.5" r="0.5"/>
<circle cx="396.2" cy="304.9" r="0.7"/>
<circle cx="525.0" cy="311.6" r="0.6"/>
<circle cx="717.9" cy="308.2" r="0.5"/>
<circle cx="478.4" cy="331.5" r="0.5"/>
<circle cx="280.2" cy="225.4" r="0.7"/>
<circle cx="210.7" cy="231.1" r="0.9"/>
<circle cx="486.2" cy="229.4" r="0.6"/>
<circle cx="705.0" cy="256.0" r="0.7"/>
<circle cx="509.5" cy="336.4" r="0.9"/>
<circle cx="675.0" cy="268.2" r="0.9"/>
<circle cx="719.4" cy="247.0" r="0.5"/>
<circle cx="404.3" cy="228.9" r="0.5"/>
<circle cx="210.7" cy="216.0" r="0.9"/>
<circle cx="764.5" cy="314.4" r="0.7"/>
<circle cx="627.0" cy="204.6" r="0.6"/>
<circle cx="703.3" cy="326.2" r="0.7"/>
<circle cx="380.5" cy="232.7" r="0.9"/>
<circle cx="494.4" cy="219.4" r="0.6"/>
<circle cx="615.5" cy="217.6" r="0.6"/>
<circle cx="517.0" cy="344.0" r="0.7"/>
<circle cx="428.6" cy="203.9" r="0.6"/>
<circle cx="53.0" cy="318.4" r="0.6"/>
<circle cx="652.1" cy="208.3" r="0.7"/>
<circle cx="500.9" cy="274.7" r="0.9"/>
<circle cx="558.4" cy="208.3" r="0.7"/>
<circle cx="65.9" cy="224.0" r="0.6"/>
<circle cx="721.2" cy="209.6" r="0.9"/>
<circle cx="204.1" cy="277.0" r="0.9"/>
<circle cx="167.0" cy="320.0" r="0.7"/>
<circle cx="282.8" cy="256.4" r="0.7"/>
<circle cx="780.0" cy="295.4" r="0.5"/>
<circle cx="314.6" cy="298.4" r="0.5"/>
<circle cx="539.4" cy="296.7" r="0.5"/>
<circle cx="529.4" cy="197.8" r="0.9"/>
<circle cx="571.6" cy="266.8" r="0.7"/>
<circle cx="463.8" cy="264.3" r="0.5"/>
<circle cx="676.9" cy="321.8" r="0.6"/>
<circle cx="710.1" cy="218.7" r="0.9"/>
<circle cx="736.3" cy="307.7" r="0.7"/>
<circle cx="603.1" cy="278.8" r="0.5"/>
<circle cx="239.2" cy="225.8" r="0.5"/>
<circle cx="292.5" cy="336.8" r="0.9"/>
<circle cx="580.4" cy="245.4" r="0.9"/>
<circle cx="119.4" cy="217.0" r="0.5"/>
<circle cx="148.0" cy="289.9" r="0.6"/>
</g>
<clipPath id="co"><polygon points="388.7,191.5 429.7,191.3 450.8,180.0 488.4,162.0 499.0,155.5 509.5,150.8 520.0,148.4 536.0,146.6 547.0,146.0 551.0,155.0 644.0,155.0 653.0,145.6 782.0,145.6 782.0,196.8 660.0,202.4 600.0,204.5 520.0,208.6 422.0,213.4 388.7,215.0"/></clipPath>
<polygon points="388.7,191.5 429.7,191.3 450.8,180.0 488.4,162.0 499.0,155.5 509.5,150.8 520.0,148.4 536.0,146.6 547.0,146.0 551.0,155.0 644.0,155.0 653.0,145.6 782.0,145.6 782.0,196.8 660.0,202.4 600.0,204.5 520.0,208.6 422.0,213.4 388.7,215.0" fill="#fde9d7"/>
<g clip-path="url(#co)" stroke="#f39c38" stroke-width="1.0" stroke-dasharray="10 2.3" fill="none">
<line x1="310.8" y1="217.0" x2="389.6" y2="143.6" stroke-dashoffset="1.9"/>
<line x1="321.4" y1="217.0" x2="400.2" y2="143.6" stroke-dashoffset="8.0"/>
<line x1="332.0" y1="217.0" x2="410.8" y2="143.6" stroke-dashoffset="0.9"/>
<line x1="342.6" y1="217.0" x2="421.4" y2="143.6" stroke-dashoffset="6.6"/>
<line x1="353.2" y1="217.0" x2="432.0" y2="143.6" stroke-dashoffset="4.5"/>
<line x1="363.8" y1="217.0" x2="442.6" y2="143.6" stroke-dashoffset="0.7"/>
<line x1="374.4" y1="217.0" x2="453.2" y2="143.6" stroke-dashoffset="6.2"/>
<line x1="385.0" y1="217.0" x2="463.8" y2="143.6" stroke-dashoffset="0.5"/>
<line x1="395.6" y1="217.0" x2="474.4" y2="143.6" stroke-dashoffset="5.3"/>
<line x1="406.2" y1="217.0" x2="485.0" y2="143.6" stroke-dashoffset="0.9"/>
<line x1="416.8" y1="217.0" x2="495.6" y2="143.6" stroke-dashoffset="1.1"/>
<line x1="427.4" y1="217.0" x2="506.2" y2="143.6" stroke-dashoffset="5.2"/>
<line x1="438.0" y1="217.0" x2="516.8" y2="143.6" stroke-dashoffset="10.2"/>
<line x1="448.6" y1="217.0" x2="527.4" y2="143.6" stroke-dashoffset="1.5"/>
<line x1="459.2" y1="217.0" x2="538.0" y2="143.6" stroke-dashoffset="2.7"/>
<line x1="469.8" y1="217.0" x2="548.6" y2="143.6" stroke-dashoffset="7.7"/>
<line x1="480.4" y1="217.0" x2="559.2" y2="143.6" stroke-dashoffset="11.7"/>
<line x1="491.0" y1="217.0" x2="569.8" y2="143.6" stroke-dashoffset="7.1"/>
<line x1="501.6" y1="217.0" x2="580.4" y2="143.6" stroke-dashoffset="4.9"/>
<line x1="512.2" y1="217.0" x2="591.0" y2="143.6" stroke-dashoffset="12.0"/>
<line x1="522.8" y1="217.0" x2="601.6" y2="143.6" stroke-dashoffset="0.6"/>
<line x1="533.4" y1="217.0" x2="612.2" y2="143.6" stroke-dashoffset="10.6"/>
<line x1="544.0" y1="217.0" x2="622.8" y2="143.6" stroke-dashoffset="3.6"/>
<line x1="554.6" y1="217.0" x2="633.4" y2="143.6" stroke-dashoffset="1.8"/>
<line x1="565.2" y1="217.0" x2="644.0" y2="143.6" stroke-dashoffset="1.4"/>
<line x1="575.8" y1="217.0" x2="654.6" y2="143.6" stroke-dashoffset="3.8"/>
<line x1="586.4" y1="217.0" x2="665.2" y2="143.6" stroke-dashoffset="10.0"/>
<line x1="597.0" y1="217.0" x2="675.8" y2="143.6" stroke-dashoffset="2.2"/>
<line x1="607.6" y1="217.0" x2="686.4" y2="143.6" stroke-dashoffset="7.2"/>
<line x1="618.2" y1="217.0" x2="697.0" y2="143.6" stroke-dashoffset="7.9"/>
<line x1="628.8" y1="217.0" x2="707.6" y2="143.6" stroke-dashoffset="4.6"/>
<line x1="639.4" y1="217.0" x2="718.2" y2="143.6" stroke-dashoffset="6.7"/>
<line x1="650.0" y1="217.0" x2="728.8" y2="143.6" stroke-dashoffset="0.8"/>
<line x1="660.6" y1="217.0" x2="739.4" y2="143.6" stroke-dashoffset="0.7"/>
<line x1="671.2" y1="217.0" x2="750.0" y2="143.6" stroke-dashoffset="2.5"/>
<line x1="681.8" y1="217.0" x2="760.6" y2="143.6" stroke-dashoffset="8.4"/>
<line x1="692.4" y1="217.0" x2="771.2" y2="143.6" stroke-dashoffset="5.3"/>
<line x1="703.0" y1="217.0" x2="781.8" y2="143.6" stroke-dashoffset="3.9"/>
<line x1="713.6" y1="217.0" x2="792.4" y2="143.6" stroke-dashoffset="7.2"/>
<line x1="724.2" y1="217.0" x2="803.0" y2="143.6" stroke-dashoffset="5.6"/>
<line x1="734.8" y1="217.0" x2="813.6" y2="143.6" stroke-dashoffset="3.7"/>
<line x1="745.4" y1="217.0" x2="824.2" y2="143.6" stroke-dashoffset="9.8"/>
<line x1="756.0" y1="217.0" x2="834.8" y2="143.6" stroke-dashoffset="8.6"/>
<line x1="766.6" y1="217.0" x2="845.4" y2="143.6" stroke-dashoffset="3.0"/>
<line x1="777.2" y1="217.0" x2="856.0" y2="143.6" stroke-dashoffset="7.1"/>
<line x1="787.8" y1="217.0" x2="866.6" y2="143.6" stroke-dashoffset="6.5"/>
</g>
<clipPath id="cp"><polygon points="52.5,337.2 240.0,346.5 408.0,351.5 540.0,346.0 782.0,333.0 782.0,432.5 52.5,432.5"/></clipPath>
<polygon points="52.5,337.2 240.0,346.5 408.0,351.5 540.0,346.0 782.0,333.0 782.0,432.5 52.5,432.5" fill="#ebd8eb"/>
<g clip-path="url(#cp)">
<line x1="37.5" y1="340.5" x2="782" y2="340.5" stroke="#84407c" stroke-width="1" stroke-dasharray="10 5"/>
<line x1="42.5" y1="348.5" x2="782" y2="348.5" stroke="#84407c" stroke-width="1" stroke-dasharray="10 5"/>
<line x1="47.5" y1="357.8" x2="782" y2="357.8" stroke="#b08aa2" stroke-width="1.5" stroke-dasharray="10 5"/>
<line x1="37.5" y1="361.5" x2="782" y2="361.5" stroke="#84407c" stroke-width="1" stroke-dasharray="10 5"/>
<line x1="42.5" y1="370" x2="782" y2="370" stroke="#b08aa2" stroke-width="1.5" stroke-dasharray="10 5"/>
<line x1="47.5" y1="378" x2="782" y2="378" stroke="#b08aa2" stroke-width="1.5" stroke-dasharray="10 5"/>
<line x1="37.5" y1="382.5" x2="782" y2="382.5" stroke="#b08aa2" stroke-width="1.5" stroke-dasharray="10 5"/>
<line x1="42.5" y1="386.3" x2="782" y2="386.3" stroke="#84407c" stroke-width="1" stroke-dasharray="10 5"/>
<line x1="47.5" y1="394.9" x2="782" y2="394.9" stroke="#b08aa2" stroke-width="1.5" stroke-dasharray="10 5"/>
<line x1="37.5" y1="399.5" x2="782" y2="399.5" stroke="#84407c" stroke-width="1" stroke-dasharray="10 5"/>
<line x1="42.5" y1="403.6" x2="782" y2="403.6" stroke="#84407c" stroke-width="1" stroke-dasharray="10 5"/>
<line x1="47.5" y1="408.4" x2="782" y2="408.4" stroke="#84407c" stroke-width="1" stroke-dasharray="10 5"/>
<line x1="37.5" y1="412.6" x2="782" y2="412.6" stroke="#84407c" stroke-width="1" stroke-dasharray="10 5"/>
<line x1="42.5" y1="419.8" x2="782" y2="419.8" stroke="#b08aa2" stroke-width="1.5" stroke-dasharray="10 5"/>
<line x1="47.5" y1="425.6" x2="782" y2="425.6" stroke="#b08aa2" stroke-width="1.5" stroke-dasharray="10 5"/>
<line x1="37.5" y1="430.3" x2="782" y2="430.3" stroke="#84407c" stroke-width="1" stroke-dasharray="10 5"/>
</g>
<line x1="52.5" y1="432.5" x2="782" y2="432.5" stroke="#7a2a70" stroke-width="1"/>
<polyline points="52.5,337.2 240.0,346.5 408.0,351.5 540.0,346.0 782.0,333.0" fill="none" stroke="#a8a8a8" stroke-width="1"/>
<polyline points="388.7,215.0 422.0,213.4 520.0,208.6 600.0,204.5 660.0,202.4 782.0,196.8" fill="none" stroke="#a8a8a8" stroke-width="1"/>
<polyline points="52.5,254.3 279.6,254.3 309.7,240.4 322.5,238.0 354.4,232.5" fill="none" stroke="#a8a8a8" stroke-width="1"/>
<polyline points="388.7,191.5 429.7,191.3 450.8,180.0 488.4,162.0 499.0,155.5 509.5,150.8 520.0,148.4 536.0,146.6 547.0,146.0 551.0,155.0 644.0,155.0 653.0,145.6 782.0,145.6" fill="none" stroke="#a8a8a8" stroke-width="1" stroke-linejoin="round"/>
<clipPath id="cw"><polygon points="354.4,232.5 354.4,224.2 368.4,224.2 376.7,191.5 388.7,191.5 388.7,232.5"/></clipPath>
<polygon points="354.4,232.5 354.4,224.2 368.4,224.2 376.7,191.5 388.7,191.5 388.7,232.5" fill="#fcdada"/>
<g clip-path="url(#cw)" stroke="#f02828" stroke-width="1.2">
<line x1="359.4" y1="185" x2="359.4" y2="235"/>
<line x1="366.6" y1="185" x2="366.6" y2="235"/>
<line x1="374.5" y1="185" x2="374.5" y2="235"/>
<line x1="382" y1="185" x2="382" y2="235"/>
<line x1="350" y1="199.4" x2="392" y2="199.4"/>
<line x1="350" y1="207" x2="392" y2="207"/>
<line x1="350" y1="215" x2="392" y2="215"/>
<line x1="350" y1="222.6" x2="392" y2="222.6"/>
<line x1="350" y1="230.2" x2="392" y2="230.2"/>
</g>
<polygon points="354.4,232.5 354.4,224.2 368.4,224.2 376.7,191.5 388.7,191.5 388.7,232.5" fill="none" stroke="#a0a0a0" stroke-width="1"/>
<polyline points="322.0,238.8 353.4,246.2 397.2,237.2 444.7,229.9 482.0,214.4 513.7,202.0 557.0,185.6 594.0,155.6" fill="none" stroke="#f08010" stroke-width="1.6" stroke-linejoin="round"/>
<line x1="452.3" y1="178.5" x2="550" y2="235" stroke="#0a14e6" stroke-width="1.8"/>
<line x1="449.8" y1="182.8" x2="454.8" y2="174.2" stroke="#0a14e6" stroke-width="1.8"/>
<line x1="490.6" y1="161.2" x2="588" y2="217.4" stroke="#0a14e6" stroke-width="1.8"/>
<line x1="488.1" y1="165.5" x2="493.1" y2="156.9" stroke="#0a14e6" stroke-width="1.8"/>
<line x1="555.5" y1="125.5" x2="636.5" y2="125.5" stroke="#2b54c2" stroke-width="1"/>
<line x1="555.5" y1="125.5" x2="555.5" y2="154.5" stroke="#2b54c2" stroke-width="1"/>
<polyline points="552.5,149.3 555.5,154.5 558.5,149.3" fill="none" stroke="#2b54c2" stroke-width="1"/>
<line x1="566.5" y1="125.5" x2="566.5" y2="154.5" stroke="#2b54c2" stroke-width="1"/>
<polyline points="563.5,149.3 566.5,154.5 569.5,149.3" fill="none" stroke="#2b54c2" stroke-width="1"/>
<line x1="578.5" y1="125.5" x2="578.5" y2="154.5" stroke="#2b54c2" stroke-width="1"/>
<polyline points="575.5,149.3 578.5,154.5 581.5,149.3" fill="none" stroke="#2b54c2" stroke-width="1"/>
<line x1="589.5" y1="125.5" x2="589.5" y2="154.5" stroke="#2b54c2" stroke-width="1"/>
<polyline points="586.5,149.3 589.5,154.5 592.5,149.3" fill="none" stroke="#2b54c2" stroke-width="1"/>
<line x1="601.5" y1="125.5" x2="601.5" y2="154.5" stroke="#2b54c2" stroke-width="1"/>
<polyline points="598.5,149.3 601.5,154.5 604.5,149.3" fill="none" stroke="#2b54c2" stroke-width="1"/>
<line x1="612.5" y1="125.5" x2="612.5" y2="154.5" stroke="#2b54c2" stroke-width="1"/>
<polyline points="609.5,149.3 612.5,154.5 615.5,149.3" fill="none" stroke="#2b54c2" stroke-width="1"/>
<line x1="624.5" y1="125.5" x2="624.5" y2="154.5" stroke="#2b54c2" stroke-width="1"/>
<polyline points="621.5,149.3 624.5,154.5 627.5,149.3" fill="none" stroke="#2b54c2" stroke-width="1"/>
<line x1="636.5" y1="125.5" x2="636.5" y2="154.5" stroke="#2b54c2" stroke-width="1"/>
<polyline points="633.5,149.3 636.5,154.5 639.5,149.3" fill="none" stroke="#2b54c2" stroke-width="1"/>
<line x1="395.5" y1="186.5" x2="424.5" y2="186.5" stroke="#2b54c2" stroke-width="1"/>
<line x1="395.5" y1="186.5" x2="395.5" y2="190.8" stroke="#2b54c2" stroke-width="1"/>
<polyline points="393.6,187.6 395.5,190.8 397.4,187.6" fill="none" stroke="#2b54c2" stroke-width="1"/>
<line x1="410.5" y1="186.5" x2="410.5" y2="190.8" stroke="#2b54c2" stroke-width="1"/>
<polyline points="408.6,187.6 410.5,190.8 412.4,187.6" fill="none" stroke="#2b54c2" stroke-width="1"/>
<line x1="424.5" y1="186.5" x2="424.5" y2="190.8" stroke="#2b54c2" stroke-width="1"/>
<polyline points="422.6,187.6 424.5,190.8 426.4,187.6" fill="none" stroke="#2b54c2" stroke-width="1"/>
<line x1="52.5" y1="99" x2="52.5" y2="509" stroke="#8c4a70" stroke-width="1.1" stroke-dasharray="6 4"/>
<line x1="782.5" y1="99" x2="782.5" y2="509" stroke="#9a6ab0" stroke-width="1.1" stroke-dasharray="6 4"/>
<line x1="52.5" y1="254" x2="52.5" y2="433" stroke="#8c3a78" stroke-width="1.2"/>
<line x1="782.5" y1="145.5" x2="782.5" y2="433" stroke="#b060b0" stroke-width="1"/>
<line x1="52.5" y1="458" x2="782" y2="458" stroke="#7a7a7a" stroke-width="1.6"/>
<line x1="52.5" y1="458" x2="52.5" y2="463.5" stroke="#222" stroke-width="1"/>
<line x1="84.5" y1="458" x2="84.5" y2="463.5" stroke="#222" stroke-width="1"/>
<line x1="117.5" y1="458" x2="117.5" y2="463.5" stroke="#222" stroke-width="1"/>
<line x1="149.5" y1="458" x2="149.5" y2="463.5" stroke="#222" stroke-width="1"/>
<line x1="182.5" y1="458" x2="182.5" y2="463.5" stroke="#222" stroke-width="1"/>
<line x1="214.5" y1="458" x2="214.5" y2="463.5" stroke="#222" stroke-width="1"/>
<line x1="247.5" y1="458" x2="247.5" y2="463.5" stroke="#222" stroke-width="1"/>
<line x1="279.5" y1="458" x2="279.5" y2="463.5" stroke="#222" stroke-width="1"/>
<line x1="311.5" y1="458" x2="311.5" y2="463.5" stroke="#222" stroke-width="1"/>
<line x1="344.5" y1="458" x2="344.5" y2="463.5" stroke="#222" stroke-width="1"/>
<line x1="376.5" y1="458" x2="376.5" y2="463.5" stroke="#222" stroke-width="1"/>
<line x1="409.5" y1="458" x2="409.5" y2="463.5" stroke="#222" stroke-width="1"/>
<line x1="441.5" y1="458" x2="441.5" y2="463.5" stroke="#222" stroke-width="1"/>
<line x1="473.5" y1="458" x2="473.5" y2="463.5" stroke="#222" stroke-width="1"/>
<line x1="506.5" y1="458" x2="506.5" y2="463.5" stroke="#222" stroke-width="1"/>
<line x1="538.5" y1="458" x2="538.5" y2="463.5" stroke="#222" stroke-width="1"/>
<line x1="571.5" y1="458" x2="571.5" y2="463.5" stroke="#222" stroke-width="1"/>
<line x1="603.5" y1="458" x2="603.5" y2="463.5" stroke="#222" stroke-width="1"/>
<line x1="636.5" y1="458" x2="636.5" y2="463.5" stroke="#222" stroke-width="1"/>
<line x1="668.5" y1="458" x2="668.5" y2="463.5" stroke="#222" stroke-width="1"/>
<line x1="700.5" y1="458" x2="700.5" y2="463.5" stroke="#222" stroke-width="1"/>
<line x1="733.5" y1="458" x2="733.5" y2="463.5" stroke="#222" stroke-width="1"/>
<line x1="765.5" y1="458" x2="765.5" y2="463.5" stroke="#222" stroke-width="1"/>
<line x1="781.5" y1="458" x2="781.5" y2="463.5" stroke="#222" stroke-width="1"/>
<line x1="807.5" y1="145" x2="807.5" y2="433.5" stroke="#222" stroke-width="1"/>
<line x1="807" y1="145.5" x2="812" y2="145.5" stroke="#222" stroke-width="1"/>
<line x1="807" y1="184.5" x2="812" y2="184.5" stroke="#222" stroke-width="1"/>
<line x1="807" y1="216.5" x2="812" y2="216.5" stroke="#222" stroke-width="1"/>
<line x1="807" y1="248.5" x2="812" y2="248.5" stroke="#222" stroke-width="1"/>
<line x1="807" y1="281.5" x2="812" y2="281.5" stroke="#222" stroke-width="1"/>
<line x1="807" y1="313.5" x2="812" y2="313.5" stroke="#222" stroke-width="1"/>
<line x1="807" y1="346.5" x2="812" y2="346.5" stroke="#222" stroke-width="1"/>
<line x1="807" y1="378.5" x2="812" y2="378.5" stroke="#222" stroke-width="1"/>
<line x1="807" y1="411.5" x2="812" y2="411.5" stroke="#222" stroke-width="1"/>
<line x1="807" y1="433.5" x2="812" y2="433.5" stroke="#222" stroke-width="1"/>
<line x1="40.5" y1="81" x2="40.5" y2="84" stroke="#333" stroke-width="1"/>
<line x1="44.5" y1="80" x2="44.5" y2="84" stroke="#333" stroke-width="1"/>
<line x1="48.5" y1="81" x2="48.5" y2="84" stroke="#333" stroke-width="1"/>
<line x1="52.5" y1="80" x2="52.5" y2="84" stroke="#333" stroke-width="1"/>
<line x1="56.5" y1="81" x2="56.5" y2="84" stroke="#333" stroke-width="1"/>
<line x1="60.5" y1="80" x2="60.5" y2="84" stroke="#333" stroke-width="1"/>
<line x1="64.5" y1="81" x2="64.5" y2="84" stroke="#333" stroke-width="1"/>
<line x1="68.5" y1="80" x2="68.5" y2="84" stroke="#333" stroke-width="1"/>
<line x1="72.5" y1="81" x2="72.5" y2="84" stroke="#333" stroke-width="1"/>
<line x1="76.5" y1="80" x2="76.5" y2="84" stroke="#333" stroke-width="1"/>
<line x1="80.5" y1="81" x2="80.5" y2="84" stroke="#333" stroke-width="1"/>
<line x1="84.5" y1="80" x2="84.5" y2="84" stroke="#333" stroke-width="1"/>
<line x1="88.5" y1="81" x2="88.5" y2="84" stroke="#333" stroke-width="1"/>
<line x1="93.5" y1="80" x2="93.5" y2="84" stroke="#333" stroke-width="1"/>
<line x1="97.5" y1="81" x2="97.5" y2="84" stroke="#333" stroke-width="1"/>
<line x1="101.5" y1="80" x2="101.5" y2="84" stroke="#333" stroke-width="1"/>
<line x1="105.5" y1="81" x2="105.5" y2="84" stroke="#333" stroke-width="1"/>
<line x1="109.5" y1="80" x2="109.5" y2="84" stroke="#333" stroke-width="1"/>
<line x1="113.5" y1="81" x2="113.5" y2="84" stroke="#333" stroke-width="1"/>
<line x1="117.5" y1="80" x2="117.5" y2="84" stroke="#333" stroke-width="1"/>
<line x1="121.5" y1="81" x2="121.5" y2="84" stroke="#333" stroke-width="1"/>
<line x1="125.5" y1="80" x2="125.5" y2="84" stroke="#333" stroke-width="1"/>
<line x1="129.5" y1="81" x2="129.5" y2="84" stroke="#333" stroke-width="1"/>
<line x1="133.5" y1="80" x2="133.5" y2="84" stroke="#333" stroke-width="1"/>
<line x1="137.5" y1="81" x2="137.5" y2="84" stroke="#333" stroke-width="1"/>
<line x1="141.5" y1="80" x2="141.5" y2="84" stroke="#333" stroke-width="1"/>
<line x1="145.5" y1="81" x2="145.5" y2="84" stroke="#333" stroke-width="1"/>
<line x1="149.5" y1="80" x2="149.5" y2="84" stroke="#333" stroke-width="1"/>
<line x1="153.5" y1="81" x2="153.5" y2="84" stroke="#333" stroke-width="1"/>
<line x1="157.5" y1="80" x2="157.5" y2="84" stroke="#333" stroke-width="1"/>
<line x1="161.5" y1="81" x2="161.5" y2="84" stroke="#333" stroke-width="1"/>
<line x1="165.5" y1="80" x2="165.5" y2="84" stroke="#333" stroke-width="1"/>
<line x1="170.5" y1="81" x2="170.5" y2="84" stroke="#333" stroke-width="1"/>
<line x1="174.5" y1="80" x2="174.5" y2="84" stroke="#333" stroke-width="1"/>
<line x1="178.5" y1="81" x2="178.5" y2="84" stroke="#333" stroke-width="1"/>
<line x1="182.5" y1="80" x2="182.5" y2="84" stroke="#333" stroke-width="1"/>
<line x1="186.5" y1="81" x2="186.5" y2="84" stroke="#333" stroke-width="1"/>
<line x1="190.5" y1="80" x2="190.5" y2="84" stroke="#333" stroke-width="1"/>
<line x1="194.5" y1="81" x2="194.5" y2="84" stroke="#333" stroke-width="1"/>
<line x1="198.5" y1="80" x2="198.5" y2="84" stroke="#333" stroke-width="1"/>
<line x1="202.5" y1="81" x2="202.5" y2="84" stroke="#333" stroke-width="1"/>
<line x1="206.5" y1="80" x2="206.5" y2="84" stroke="#333" stroke-width="1"/>
<line x1="210.5" y1="81" x2="210.5" y2="84" stroke="#333" stroke-width="1"/>
<line x1="214.5" y1="80" x2="214.5" y2="84" stroke="#333" stroke-width="1"/>
<line x1="218.5" y1="81" x2="218.5" y2="84" stroke="#333" stroke-width="1"/>
<line x1="222.5" y1="80" x2="222.5" y2="84" stroke="#333" stroke-width="1"/>
<line x1="226.5" y1="81" x2="226.5" y2="84" stroke="#333" stroke-width="1"/>
<line x1="230.5" y1="80" x2="230.5" y2="84" stroke="#333" stroke-width="1"/>
<line x1="234.5" y1="81" x2="234.5" y2="84" stroke="#333" stroke-width="1"/>
<line x1="238.5" y1="80" x2="238.5" y2="84" stroke="#333" stroke-width="1"/>
<line x1="242.5" y1="81" x2="242.5" y2="84" stroke="#333" stroke-width="1"/>
<line x1="247.5" y1="80" x2="247.5" y2="84" stroke="#333" stroke-width="1"/>
<line x1="251.5" y1="81" x2="251.5" y2="84" stroke="#333" stroke-width="1"/>
<line x1="255.5" y1="80" x2="255.5" y2="84" stroke="#333" stroke-width="1"/>
<line x1="259.5" y1="81" x2="259.5" y2="84" stroke="#333" stroke-width="1"/>
<line x1="263.5" y1="80" x2="263.5" y2="84" stroke="#333" stroke-width="1"/>
<line x1="267.5" y1="81" x2="267.5" y2="84" stroke="#333" stroke-width="1"/>
<line x1="271.5" y1="80" x2="271.5" y2="84" stroke="#333" stroke-width="1"/>
<line x1="275.5" y1="81" x2="275.5" y2="84" stroke="#333" stroke-width="1"/>
<line x1="279.5" y1="80" x2="279.5" y2="84" stroke="#333" stroke-width="1"/>
<line x1="283.5" y1="81" x2="283.5" y2="84" stroke="#333" stroke-width="1"/>
<line x1="287.5" y1="80" x2="287.5" y2="84" stroke="#333" stroke-width="1"/>
<line x1="291.5" y1="81" x2="291.5" y2="84" stroke="#333" stroke-width="1"/>
<line x1="295.5" y1="80" x2="295.5" y2="84" stroke="#333" stroke-width="1"/>
<line x1="299.5" y1="81" x2="299.5" y2="84" stroke="#333" stroke-width="1"/>
<line x1="303.5" y1="80" x2="303.5" y2="84" stroke="#333" stroke-width="1"/>
<line x1="307.5" y1="81" x2="307.5" y2="84" stroke="#333" stroke-width="1"/>
<line x1="311.5" y1="80" x2="311.5" y2="84" stroke="#333" stroke-width="1"/>
<line x1="315.5" y1="81" x2="315.5" y2="84" stroke="#333" stroke-width="1"/>
<line x1="319.5" y1="80" x2="319.5" y2="84" stroke="#333" stroke-width="1"/>
<line x1="324.5" y1="81" x2="324.5" y2="84" stroke="#333" stroke-width="1"/>
<line x1="328.5" y1="80" x2="328.5" y2="84" stroke="#333" stroke-width="1"/>
<line x1="332.5" y1="81" x2="332.5" y2="84" stroke="#333" stroke-width="1"/>
<line x1="336.5" y1="80" x2="336.5" y2="84" stroke="#333" stroke-width="1"/>
<line x1="340.5" y1="81" x2="340.5" y2="84" stroke="#333" stroke-width="1"/>
<line x1="344.5" y1="80" x2="344.5" y2="84" stroke="#333" stroke-width="1"/>
<line x1="348.5" y1="81" x2="348.5" y2="84" stroke="#333" stroke-width="1"/>
<line x1="352.5" y1="80" x2="352.5" y2="84" stroke="#333" stroke-width="1"/>
<line x1="356.5" y1="81" x2="356.5" y2="84" stroke="#333" stroke-width="1"/>
<line x1="360.5" y1="80" x2="360.5" y2="84" stroke="#333" stroke-width="1"/>
<line x1="364.5" y1="81" x2="364.5" y2="84" stroke="#333" stroke-width="1"/>
<line x1="368.5" y1="80" x2="368.5" y2="84" stroke="#333" stroke-width="1"/>
<line x1="372.5" y1="81" x2="372.5" y2="84" stroke="#333" stroke-width="1"/>
<line x1="376.5" y1="80" x2="376.5" y2="84" stroke="#333" stroke-width="1"/>
<line x1="380.5" y1="81" x2="380.5" y2="84" stroke="#333" stroke-width="1"/>
<line x1="384.5" y1="80" x2="384.5" y2="84" stroke="#333" stroke-width="1"/>
<line x1="388.5" y1="81" x2="388.5" y2="84" stroke="#333" stroke-width="1"/>
<line x1="392.5" y1="80" x2="392.5" y2="84" stroke="#333" stroke-width="1"/>
<line x1="396.5" y1="81" x2="396.5" y2="84" stroke="#333" stroke-width="1"/>
<line x1="401.5" y1="80" x2="401.5" y2="84" stroke="#333" stroke-width="1"/>
<line x1="405.5" y1="81" x2="405.5" y2="84" stroke="#333" stroke-width="1"/>
<line x1="409.5" y1="80" x2="409.5" y2="84" stroke="#333" stroke-width="1"/>
<line x1="413.5" y1="81" x2="413.5" y2="84" stroke="#333" stroke-width="1"/>
<line x1="417.5" y1="80" x2="417.5" y2="84" stroke="#333" stroke-width="1"/>
<line x1="421.5" y1="81" x2="421.5" y2="84" stroke="#333" stroke-width="1"/>
<line x1="425.5" y1="80" x2="425.5" y2="84" stroke="#333" stroke-width="1"/>
<line x1="429.5" y1="81" x2="429.5" y2="84" stroke="#333" stroke-width="1"/>
<line x1="433.5" y1="80" x2="433.5" y2="84" stroke="#333" stroke-width="1"/>
<line x1="437.5" y1="81" x2="437.5" y2="84" stroke="#333" stroke-width="1"/>
<line x1="441.5" y1="80" x2="441.5" y2="84" stroke="#333" stroke-width="1"/>
<line x1="445.5" y1="81" x2="445.5" y2="84" stroke="#333" stroke-width="1"/>
<line x1="449.5" y1="80" x2="449.5" y2="84" stroke="#333" stroke-width="1"/>
<line x1="453.5" y1="81" x2="453.5" y2="84" stroke="#333" stroke-width="1"/>
<line x1="457.5" y1="80" x2="457.5" y2="84" stroke="#333" stroke-width="1"/>
<line x1="461.5" y1="81" x2="461.5" y2="84" stroke="#333" stroke-width="1"/>
<line x1="465.5" y1="80" x2="465.5" y2="84" stroke="#333" stroke-width="1"/>
<line x1="469.5" y1="81" x2="469.5" y2="84" stroke="#333" stroke-width="1"/>
<line x1="473.5" y1="80" x2="473.5" y2="84" stroke="#333" stroke-width="1"/>
<line x1="478.5" y1="81" x2="478.5" y2="84" stroke="#333" stroke-width="1"/>
<line x1="482.5" y1="80" x2="482.5" y2="84" stroke="#333" stroke-width="1"/>
<line x1="486.5" y1="81" x2="486.5" y2="84" stroke="#333" stroke-width="1"/>
<line x1="490.5" y1="80" x2="490.5" y2="84" stroke="#333" stroke-width="1"/>
<line x1="494.5" y1="81" x2="494.5" y2="84" stroke="#333" stroke-width="1"/>
<line x1="498.5" y1="80" x2="498.5" y2="84" stroke="#333" stroke-width="1"/>
<line x1="502.5" y1="81" x2="502.5" y2="84" stroke="#333" stroke-width="1"/>
<line x1="506.5" y1="80" x2="506.5" y2="84" stroke="#333" stroke-width="1"/>
<line x1="510.5" y1="81" x2="510.5" y2="84" stroke="#333" stroke-width="1"/>
<line x1="514.5" y1="80" x2="514.5" y2="84" stroke="#333" stroke-width="1"/>
<line x1="518.5" y1="81" x2="518.5" y2="84" stroke="#333" stroke-width="1"/>
<line x1="522.5" y1="80" x2="522.5" y2="84" stroke="#333" stroke-width="1"/>
<line x1="526.5" y1="81" x2="526.5" y2="84" stroke="#333" stroke-width="1"/>
<line x1="530.5" y1="80" x2="530.5" y2="84" stroke="#333" stroke-width="1"/>
<line x1="534.5" y1="81" x2="534.5" y2="84" stroke="#333" stroke-width="1"/>
<line x1="538.5" y1="80" x2="538.5" y2="84" stroke="#333" stroke-width="1"/>
<line x1="542.5" y1="81" x2="542.5" y2="84" stroke="#333" stroke-width="1"/>
<line x1="546.5" y1="80" x2="546.5" y2="84" stroke="#333" stroke-width="1"/>
<line x1="550.5" y1="81" x2="550.5" y2="84" stroke="#333" stroke-width="1"/>
<line x1="555.5" y1="80" x2="555.5" y2="84" stroke="#333" stroke-width="1"/>
<line x1="559.5" y1="81" x2="559.5" y2="84" stroke="#333" stroke-width="1"/>
<line x1="563.5" y1="80" x2="563.5" y2="84" stroke="#333" stroke-width="1"/>
<line x1="567.5" y1="81" x2="567.5" y2="84" stroke="#333" stroke-width="1"/>
<line x1="571.5" y1="80" x2="571.5" y2="84" stroke="#333" stroke-width="1"/>
<line x1="575.5" y1="81" x2="575.5" y2="84" stroke="#333" stroke-width="1"/>
<line x1="579.5" y1="80" x2="579.5" y2="84" stroke="#333" stroke-width="1"/>
<line x1="583.5" y1="81" x2="583.5" y2="84" stroke="#333" stroke-width="1"/>
<line x1="587.5" y1="80" x2="587.5" y2="84" stroke="#333" stroke-width="1"/>
<line x1="591.5" y1="81" x2="591.5" y2="84" stroke="#333" stroke-width="1"/>
<line x1="595.5" y1="80" x2="595.5" y2="84" stroke="#333" stroke-width="1"/>
<line x1="599.5" y1="81" x2="599.5" y2="84" stroke="#333" stroke-width="1"/>
<line x1="603.5" y1="80" x2="603.5" y2="84" stroke="#333" stroke-width="1"/>
<line x1="607.5" y1="81" x2="607.5" y2="84" stroke="#333" stroke-width="1"/>
<line x1="611.5" y1="80" x2="611.5" y2="84" stroke="#333" stroke-width="1"/>
<line x1="615.5" y1="81" x2="615.5" y2="84" stroke="#333" stroke-width="1"/>
<line x1="619.5" y1="80" x2="619.5" y2="84" stroke="#333" stroke-width="1"/>
<line x1="623.5" y1="81" x2="623.5" y2="84" stroke="#333" stroke-width="1"/>
<line x1="627.5" y1="80" x2="627.5" y2="84" stroke="#333" stroke-width="1"/>
<line x1="632.5" y1="81" x2="632.5" y2="84" stroke="#333" stroke-width="1"/>
<line x1="636.5" y1="80" x2="636.5" y2="84" stroke="#333" stroke-width="1"/>
<line x1="640.5" y1="81" x2="640.5" y2="84" stroke="#333" stroke-width="1"/>
<line x1="644.5" y1="80" x2="644.5" y2="84" stroke="#333" stroke-width="1"/>
<line x1="648.5" y1="81" x2="648.5" y2="84" stroke="#333" stroke-width="1"/>
<line x1="652.5" y1="80" x2="652.5" y2="84" stroke="#333" stroke-width="1"/>
<line x1="656.5" y1="81" x2="656.5" y2="84" stroke="#333" stroke-width="1"/>
<line x1="660.5" y1="80" x2="660.5" y2="84" stroke="#333" stroke-width="1"/>
<line x1="664.5" y1="81" x2="664.5" y2="84" stroke="#333" stroke-width="1"/>
<line x1="668.5" y1="80" x2="668.5" y2="84" stroke="#333" stroke-width="1"/>
<line x1="672.5" y1="81" x2="672.5" y2="84" stroke="#333" stroke-width="1"/>
<line x1="676.5" y1="80" x2="676.5" y2="84" stroke="#333" stroke-width="1"/>
<line x1="680.5" y1="81" x2="680.5" y2="84" stroke="#333" stroke-width="1"/>
<line x1="684.5" y1="80" x2="684.5" y2="84" stroke="#333" stroke-width="1"/>
<line x1="688.5" y1="81" x2="688.5" y2="84" stroke="#333" stroke-width="1"/>
<line x1="692.5" y1="80" x2="692.5" y2="84" stroke="#333" stroke-width="1"/>
<line x1="696.5" y1="81" x2="696.5" y2="84" stroke="#333" stroke-width="1"/>
<line x1="700.5" y1="80" x2="700.5" y2="84" stroke="#333" stroke-width="1"/>
<line x1="704.5" y1="81" x2="704.5" y2="84" stroke="#333" stroke-width="1"/>
<line x1="709.5" y1="80" x2="709.5" y2="84" stroke="#333" stroke-width="1"/>
<line x1="713.5" y1="81" x2="713.5" y2="84" stroke="#333" stroke-width="1"/>
<line x1="717.5" y1="80" x2="717.5" y2="84" stroke="#333" stroke-width="1"/>
<line x1="721.5" y1="81" x2="721.5" y2="84" stroke="#333" stroke-width="1"/>
<line x1="725.5" y1="80" x2="725.5" y2="84" stroke="#333" stroke-width="1"/>
<line x1="729.5" y1="81" x2="729.5" y2="84" stroke="#333" stroke-width="1"/>
<line x1="733.5" y1="80" x2="733.5" y2="84" stroke="#333" stroke-width="1"/>
<line x1="737.5" y1="81" x2="737.5" y2="84" stroke="#333" stroke-width="1"/>
<line x1="741.5" y1="80" x2="741.5" y2="84" stroke="#333" stroke-width="1"/>
<line x1="745.5" y1="81" x2="745.5" y2="84" stroke="#333" stroke-width="1"/>
<line x1="749.5" y1="80" x2="749.5" y2="84" stroke="#333" stroke-width="1"/>
<line x1="753.5" y1="81" x2="753.5" y2="84" stroke="#333" stroke-width="1"/>
<line x1="757.5" y1="80" x2="757.5" y2="84" stroke="#333" stroke-width="1"/>
<line x1="761.5" y1="81" x2="761.5" y2="84" stroke="#333" stroke-width="1"/>
<line x1="765.5" y1="80" x2="765.5" y2="84" stroke="#333" stroke-width="1"/>
<line x1="769.5" y1="81" x2="769.5" y2="84" stroke="#333" stroke-width="1"/>
<line x1="773.5" y1="80" x2="773.5" y2="84" stroke="#333" stroke-width="1"/>
<line x1="777.5" y1="81" x2="777.5" y2="84" stroke="#333" stroke-width="1"/>
<line x1="781.5" y1="80" x2="781.5" y2="84" stroke="#333" stroke-width="1"/>
<line x1="786.5" y1="81" x2="786.5" y2="84" stroke="#333" stroke-width="1"/>
<line x1="790.5" y1="80" x2="790.5" y2="84" stroke="#333" stroke-width="1"/>
<line x1="794.5" y1="81" x2="794.5" y2="84" stroke="#333" stroke-width="1"/>
<line x1="798.5" y1="80" x2="798.5" y2="84" stroke="#333" stroke-width="1"/>
<line x1="802.5" y1="81" x2="802.5" y2="84" stroke="#333" stroke-width="1"/>
<line x1="806.5" y1="80" x2="806.5" y2="84" stroke="#333" stroke-width="1"/>
<line x1="810.5" y1="81" x2="810.5" y2="84" stroke="#333" stroke-width="1"/>
<line x1="814.5" y1="80" x2="814.5" y2="84" stroke="#333" stroke-width="1"/>
<line x1="818.5" y1="81" x2="818.5" y2="84" stroke="#333" stroke-width="1"/>
<line x1="822.5" y1="80" x2="822.5" y2="84" stroke="#333" stroke-width="1"/>
<line x1="826.5" y1="81" x2="826.5" y2="84" stroke="#333" stroke-width="1"/>
</svg>
<div class="t" style="left:815px;top:140.8px;font-size:8px;color:#1a1a1a;letter-spacing:-0.25px;">128,75</div>
<div class="t" style="left:815px;top:179.8px;font-size:8px;color:#1a1a1a;letter-spacing:-0.25px;">124,00</div>
<div class="t" style="left:815px;top:211.8px;font-size:8px;color:#1a1a1a;letter-spacing:-0.25px;">120,00</div>
<div class="t" style="left:815px;top:244.3px;font-size:8px;color:#1a1a1a;letter-spacing:-0.25px;">116,00</div>
<div class="t" style="left:815px;top:276.8px;font-size:8px;color:#1a1a1a;letter-spacing:-0.25px;">112,00</div>
<div class="t" style="left:815px;top:309.3px;font-size:8px;color:#1a1a1a;letter-spacing:-0.25px;">108,00</div>
<div class="t" style="left:815px;top:341.8px;font-size:8px;color:#1a1a1a;letter-spacing:-0.25px;">104,00</div>
<div class="t" style="left:815px;top:374.3px;font-size:8px;color:#1a1a1a;letter-spacing:-0.25px;">100,00</div>
<div class="t" style="left:815px;top:406.8px;font-size:8px;color:#1a1a1a;letter-spacing:-0.25px;">96,00</div>
<div class="t" style="left:815px;top:428.8px;font-size:8px;color:#1a1a1a;letter-spacing:-0.25px;">93,26</div>
<div class="t" style="left:47.9px;top:495px;width:30px;text-align:right;font-size:8.4px;color:#1a1a1a;letter-spacing:-0.3px;transform-origin:0 0;transform:rotate(-90deg);line-height:9px;">-20,00</div>
<div class="t" style="left:80.3px;top:495px;width:30px;text-align:right;font-size:8.4px;color:#1a1a1a;letter-spacing:-0.3px;transform-origin:0 0;transform:rotate(-90deg);line-height:9px;">-16,00</div>
<div class="t" style="left:112.7px;top:495px;width:30px;text-align:right;font-size:8.4px;color:#1a1a1a;letter-spacing:-0.3px;transform-origin:0 0;transform:rotate(-90deg);line-height:9px;">-12,00</div>
<div class="t" style="left:145.2px;top:495px;width:30px;text-align:right;font-size:8.4px;color:#1a1a1a;letter-spacing:-0.3px;transform-origin:0 0;transform:rotate(-90deg);line-height:9px;">-8,00</div>
<div class="t" style="left:177.6px;top:495px;width:30px;text-align:right;font-size:8.4px;color:#1a1a1a;letter-spacing:-0.3px;transform-origin:0 0;transform:rotate(-90deg);line-height:9px;">-4,00</div>
<div class="t" style="left:210.0px;top:495px;width:30px;text-align:right;font-size:8.4px;color:#1a1a1a;letter-spacing:-0.3px;transform-origin:0 0;transform:rotate(-90deg);line-height:9px;">0,00</div>
<div class="t" style="left:242.4px;top:495px;width:30px;text-align:right;font-size:8.4px;color:#1a1a1a;letter-spacing:-0.3px;transform-origin:0 0;transform:rotate(-90deg);line-height:9px;">4,00</div>
<div class="t" style="left:274.8px;top:495px;width:30px;text-align:right;font-size:8.4px;color:#1a1a1a;letter-spacing:-0.3px;transform-origin:0 0;transform:rotate(-90deg);line-height:9px;">8,00</div>
<div class="t" style="left:307.3px;top:495px;width:30px;text-align:right;font-size:8.4px;color:#1a1a1a;letter-spacing:-0.3px;transform-origin:0 0;transform:rotate(-90deg);line-height:9px;">12,00</div>
<div class="t" style="left:339.7px;top:495px;width:30px;text-align:right;font-size:8.4px;color:#1a1a1a;letter-spacing:-0.3px;transform-origin:0 0;transform:rotate(-90deg);line-height:9px;">16,00</div>
<div class="t" style="left:372.1px;top:495px;width:30px;text-align:right;font-size:8.4px;color:#1a1a1a;letter-spacing:-0.3px;transform-origin:0 0;transform:rotate(-90deg);line-height:9px;">20,00</div>
<div class="t" style="left:404.5px;top:495px;width:30px;text-align:right;font-size:8.4px;color:#1a1a1a;letter-spacing:-0.3px;transform-origin:0 0;transform:rotate(-90deg);line-height:9px;">24,00</div>
<div class="t" style="left:437.0px;top:495px;width:30px;text-align:right;font-size:8.4px;color:#1a1a1a;letter-spacing:-0.3px;transform-origin:0 0;transform:rotate(-90deg);line-height:9px;">28,00</div>
<div class="t" style="left:469.4px;top:495px;width:30px;text-align:right;font-size:8.4px;color:#1a1a1a;letter-spacing:-0.3px;transform-origin:0 0;transform:rotate(-90deg);line-height:9px;">32,00</div>
<div class="t" style="left:501.8px;top:495px;width:30px;text-align:right;font-size:8.4px;color:#1a1a1a;letter-spacing:-0.3px;transform-origin:0 0;transform:rotate(-90deg);line-height:9px;">36,00</div>
<div class="t" style="left:534.2px;top:495px;width:30px;text-align:right;font-size:8.4px;color:#1a1a1a;letter-spacing:-0.3px;transform-origin:0 0;transform:rotate(-90deg);line-height:9px;">40,00</div>
<div class="t" style="left:566.6px;top:495px;width:30px;text-align:right;font-size:8.4px;color:#1a1a1a;letter-spacing:-0.3px;transform-origin:0 0;transform:rotate(-90deg);line-height:9px;">44,00</div>
<div class="t" style="left:599.1px;top:495px;width:30px;text-align:right;font-size:8.4px;color:#1a1a1a;letter-spacing:-0.3px;transform-origin:0 0;transform:rotate(-90deg);line-height:9px;">48,00</div>
<div class="t" style="left:631.5px;top:495px;width:30px;text-align:right;font-size:8.4px;color:#1a1a1a;letter-spacing:-0.3px;transform-origin:0 0;transform:rotate(-90deg);line-height:9px;">52,00</div>
<div class="t" style="left:663.9px;top:495px;width:30px;text-align:right;font-size:8.4px;color:#1a1a1a;letter-spacing:-0.3px;transform-origin:0 0;transform:rotate(-90deg);line-height:9px;">56,00</div>
<div class="t" style="left:696.3px;top:495px;width:30px;text-align:right;font-size:8.4px;color:#1a1a1a;letter-spacing:-0.3px;transform-origin:0 0;transform:rotate(-90deg);line-height:9px;">60,00</div>
<div class="t" style="left:728.8px;top:495px;width:30px;text-align:right;font-size:8.4px;color:#1a1a1a;letter-spacing:-0.3px;transform-origin:0 0;transform:rotate(-90deg);line-height:9px;">64,00</div>
<div class="t" style="left:761.2px;top:495px;width:30px;text-align:right;font-size:8.4px;color:#1a1a1a;letter-spacing:-0.3px;transform-origin:0 0;transform:rotate(-90deg);line-height:9px;">68,00</div>
<div class="t" style="left:777.4px;top:495px;width:30px;text-align:right;font-size:8.4px;color:#1a1a1a;letter-spacing:-0.3px;transform-origin:0 0;transform:rotate(-90deg);line-height:9px;">70,00</div>
<div class="t" style="left:29.4px;top:70.6px;width:30px;text-align:center;font-size:6.4px;color:#1a1a1a;letter-spacing:-0.2px;">-21,00</div>
<div class="t" style="left:53.7px;top:70.6px;width:30px;text-align:center;font-size:6.4px;color:#1a1a1a;letter-spacing:-0.2px;">-18,00</div>
<div class="t" style="left:78.0px;top:70.6px;width:30px;text-align:center;font-size:6.4px;color:#1a1a1a;letter-spacing:-0.2px;">-15,00</div>
<div class="t" style="left:102.3px;top:70.6px;width:30px;text-align:center;font-size:6.4px;color:#1a1a1a;letter-spacing:-0.2px;">-12,00</div>
<div class="t" style="left:126.6px;top:70.6px;width:30px;text-align:center;font-size:6.4px;color:#1a1a1a;letter-spacing:-0.2px;">-9,00</div>
<div class="t" style="left:151.0px;top:70.6px;width:30px;text-align:center;font-size:6.4px;color:#1a1a1a;letter-spacing:-0.2px;">-6,00</div>
<div class="t" style="left:175.3px;top:70.6px;width:30px;text-align:center;font-size:6.4px;color:#1a1a1a;letter-spacing:-0.2px;">-3,00</div>
<div class="t" style="left:199.6px;top:70.6px;width:30px;text-align:center;font-size:6.4px;color:#1a1a1a;letter-spacing:-0.2px;">0,00</div>
<div class="t" style="left:223.9px;top:70.6px;width:30px;text-align:center;font-size:6.4px;color:#1a1a1a;letter-spacing:-0.2px;">3,00</div>
<div class="t" style="left:248.2px;top:70.6px;width:30px;text-align:center;font-size:6.4px;color:#1a1a1a;letter-spacing:-0.2px;">6,00</div>
<div class="t" style="left:272.6px;top:70.6px;width:30px;text-align:center;font-size:6.4px;color:#1a1a1a;letter-spacing:-0.2px;">9,00</div>
<div class="t" style="left:296.9px;top:70.6px;width:30px;text-align:center;font-size:6.4px;color:#1a1a1a;letter-spacing:-0.2px;">12,00</div>
<div class="t" style="left:321.2px;top:70.6px;width:30px;text-align:center;font-size:6.4px;color:#1a1a1a;letter-spacing:-0.2px;">15,00</div>
<div class="t" style="left:345.5px;top:70.6px;width:30px;text-align:center;font-size:6.4px;color:#1a1a1a;letter-spacing:-0.2px;">18,00</div>
<div class="t" style="left:369.8px;top:70.6px;width:30px;text-align:center;font-size:6.4px;color:#1a1a1a;letter-spacing:-0.2px;">21,00</div>
<div class="t" style="left:394.1px;top:70.6px;width:30px;text-align:center;font-size:6.4px;color:#1a1a1a;letter-spacing:-0.2px;">24,00</div>
<div class="t" style="left:418.5px;top:70.6px;width:30px;text-align:center;font-size:6.4px;color:#1a1a1a;letter-spacing:-0.2px;">27,00</div>
<div class="t" style="left:442.8px;top:70.6px;width:30px;text-align:center;font-size:6.4px;color:#1a1a1a;letter-spacing:-0.2px;">30,00</div>
<div class="t" style="left:467.1px;top:70.6px;width:30px;text-align:center;font-size:6.4px;color:#1a1a1a;letter-spacing:-0.2px;">33,00</div>
<div class="t" style="left:491.4px;top:70.6px;width:30px;text-align:center;font-size:6.4px;color:#1a1a1a;letter-spacing:-0.2px;">36,00</div>
<div class="t" style="left:515.7px;top:70.6px;width:30px;text-align:center;font-size:6.4px;color:#1a1a1a;letter-spacing:-0.2px;">39,00</div>
<div class="t" style="left:540.0px;top:70.6px;width:30px;text-align:center;font-size:6.4px;color:#1a1a1a;letter-spacing:-0.2px;">42,00</div>
<div class="t" style="left:564.4px;top:70.6px;width:30px;text-align:center;font-size:6.4px;color:#1a1a1a;letter-spacing:-0.2px;">45,00</div>
<div class="t" style="left:588.7px;top:70.6px;width:30px;text-align:center;font-size:6.4px;color:#1a1a1a;letter-spacing:-0.2px;">48,00</div>
<div class="t" style="left:613.0px;top:70.6px;width:30px;text-align:center;font-size:6.4px;color:#1a1a1a;letter-spacing:-0.2px;">51,00</div>
<div class="t" style="left:637.3px;top:70.6px;width:30px;text-align:center;font-size:6.4px;color:#1a1a1a;letter-spacing:-0.2px;">54,00</div>
<div class="t" style="left:661.6px;top:70.6px;width:30px;text-align:center;font-size:6.4px;color:#1a1a1a;letter-spacing:-0.2px;">57,00</div>
<div class="t" style="left:685.9px;top:70.6px;width:30px;text-align:center;font-size:6.4px;color:#1a1a1a;letter-spacing:-0.2px;">60,00</div>
<div class="t" style="left:710.3px;top:70.6px;width:30px;text-align:center;font-size:6.4px;color:#1a1a1a;letter-spacing:-0.2px;">63,00</div>
<div class="t" style="left:734.6px;top:70.6px;width:30px;text-align:center;font-size:6.4px;color:#1a1a1a;letter-spacing:-0.2px;">66,00</div>
<div class="t" style="left:758.9px;top:70.6px;width:30px;text-align:center;font-size:6.4px;color:#1a1a1a;letter-spacing:-0.2px;">69,00</div>
<div class="t" style="left:783.2px;top:70.6px;width:30px;text-align:center;font-size:6.4px;color:#1a1a1a;letter-spacing:-0.2px;">72,00</div>
<div class="t" style="left:807.5px;top:70.6px;width:30px;text-align:center;font-size:6.4px;color:#1a1a1a;letter-spacing:-0.2px;">75,00</div>
<div class="t" style="left:836px;top:71.2px;font-size:6.4px;color:#222;letter-spacing:0px;">[m]</div>
<div class="b" style="left:852px;top:70px;width:78px;height:612px;background:#f0f0f0;"></div>
<div class="b" style="left:854px;top:72px;width:73px;height:13px;background:#d6d6d6;"></div>
<div class="t" style="left:855px;top:73.8px;font-size:8px;color:#222;letter-spacing:-0.3px;">Frames</div>
<div class="b" style="left:917px;top:80px;width:5px;height:1.5px;background:#222;"></div>
<div class="b" style="left:855px;top:244.5px;width:70px;height:13.5px;background:#c9def4;border:1px dotted #a0c4ea;"></div>
<div class="b" style="left:857px;top:133.5px;width:67px;height:1px;background:#c8c8c8;"></div>
<div class="b" style="left:857px;top:242px;width:67px;height:1px;background:#c8c8c8;"></div>
<div class="t" style="left:870.7px;top:89.9px;font-size:8px;color:#1a1a1a;letter-spacing:-0.3px;">Embankment</div>
<div class="t" style="left:870.7px;top:104.8px;font-size:8px;color:#1a1a1a;letter-spacing:-0.3px;">Earth cut</div>
<div class="t" style="left:870.7px;top:119.5px;font-size:8px;color:#1a1a1a;letter-spacing:-0.3px;">Assign</div>
<div class="t" style="left:870.7px;top:138.8px;font-size:8px;color:#1a1a1a;letter-spacing:-0.3px;">Anchors</div>
<div class="t" style="left:870.7px;top:153.8px;font-size:8px;color:#1a1a1a;letter-spacing:-0.3px;">Reinforcements</div>
<div class="t" style="left:870.7px;top:168.6px;font-size:8px;color:#1a1a1a;letter-spacing:-0.3px;">Anti-slide piles</div>
<div class="t" style="left:870.7px;top:183.3px;font-size:8px;color:#1a1a1a;letter-spacing:-0.3px;">Surcharge</div>
<div class="t" style="left:870.7px;top:197.7px;font-size:8px;color:#1a1a1a;letter-spacing:-0.3px;">Water</div>
<div class="t" style="left:870.7px;top:212.7px;font-size:8px;color:#1a1a1a;letter-spacing:-0.3px;">Earthquake</div>
<div class="t" style="left:870.7px;top:227.7px;font-size:8px;color:#1a1a1a;letter-spacing:-0.3px;">Stage settings</div>
<div class="t" style="left:870.7px;top:246.6px;font-size:8px;color:#1a1a1a;letter-spacing:-0.3px;">Analysis</div>
<svg style="left:858px;top:88.7px" width="12" height="12"><path d="M0.5 10.5 L1.8 7.5 H11.2 V10.5 Z" fill="#fff" stroke="#333" stroke-width="0.9"/><path d="M3 10 L9.5 8.5" stroke="#999" stroke-width="0.6"/><path d="M2.2 7.5 L3.8 4.2 Q4.5 3.2 5.8 3.2 H7 Q8.2 3.2 8.8 4.2 L10.2 7.5" fill="none" stroke="#a81818" stroke-width="1.5"/></svg>
<svg style="left:858px;top:103.6px" width="12" height="12"><path d="M0.6 3 V10.6 H11.2 V3" fill="#fff" stroke="#333" stroke-width="0.9"/><path d="M1.2 3.6 Q3 4 4 8.2 H7.2 Q8.4 4 11 3" fill="none" stroke="#a81818" stroke-width="1.5"/></svg>
<svg style="left:858px;top:118.3px" width="12" height="12"><rect x="1.5" y="1" width="8" height="9.5" fill="#1a1a1a"/><rect x="2.5" y="2" width="6" height="2.2" fill="#2080c0"/><rect x="2.5" y="4.6" width="6" height="2.2" fill="#f0f000"/><rect x="2.5" y="7.2" width="6" height="2.3" fill="#20d8d8"/></svg>
<svg style="left:858px;top:137.6px" width="12" height="12"><path d="M0.5 10.5 H3 L9 2" fill="none" stroke="#d02020" stroke-width="0.9"/><path d="M4 5 L11 8 M5 3 L11 5.5 M3.5 7.5 L11 10.5 M6 1.5 L11 1.5" fill="none" stroke="#3040e0" stroke-width="1.1"/></svg>
<svg style="left:858px;top:152.6px" width="12" height="12"><path d="M0.5 10.5 H3 L7 2 H11" fill="none" stroke="#d02050" stroke-width="0.9"/><path d="M6 4 H11 M5 6.5 H11" stroke="#f020f0" stroke-width="1.3"/></svg>
<svg style="left:858px;top:167.4px" width="12" height="12"><path d="M3.5 11 V4 M8 11 V2" stroke="#6a1a6a" stroke-width="2.2"/><path d="M1 4.5 L10.5 1.8" stroke="#502050" stroke-width="1"/></svg>
<svg style="left:858px;top:182.1px" width="12" height="12"><rect x="0.8" y="5.8" width="10.4" height="5" fill="#fff" stroke="#333" stroke-width="0.9"/><rect x="3" y="2" width="6" height="3.2" fill="#1830d0"/><path d="M1 5.6 H11" stroke="#d02020" stroke-width="0.8"/></svg>
<svg style="left:858px;top:196.5px" width="12" height="12"><rect x="0.5" y="3" width="11" height="8" fill="#22e8f0"/><path d="M0.5 2.5 H11.5" stroke="#902020" stroke-width="0.9"/><path d="M1 5 H11" stroke="#2040e0" stroke-width="1" stroke-dasharray="1.5 1"/></svg>
<svg style="left:858px;top:211.5px" width="12" height="12"><path d="M6 1 V5 M3.5 2.5 H8.5 M2.5 5 H9.5 M3.5 5 V8 M8.5 5 V8" stroke="#222" stroke-width="1.1"/><path d="M1 11 L3 8.5 L5 11 L7 8.5 L9 11 L11 8.5" fill="none" stroke="#20a020" stroke-width="1.2"/></svg>
<svg style="left:858px;top:226.5px" width="12" height="12"><rect x="0.8" y="4.5" width="6.5" height="6.5" rx="1" fill="#e8d020" stroke="#222" stroke-width="0.9"/><rect x="4.8" y="0.8" width="6.5" height="6.5" rx="1" fill="#e8d020" stroke="#222" stroke-width="0.9"/><path d="M2.5 6.5h3M6.5 2.8h3" stroke="#222" stroke-width="0.7"/></svg>
<svg style="left:858px;top:245.4px" width="12" height="12"><path d="M0.8 9.5 C3 11.5 9 10 11 2.5 C9.5 4.5 6 6.5 2.5 7.5 Z" fill="#f01818" stroke="#222" stroke-width="0.6"/><path d="M2.5 8.8 C6 8.5 9 6 10.3 3.5" stroke="#f8d000" stroke-width="1.3" fill="none"/><path d="M10 2.5 L11.5 0.8" stroke="#208020" stroke-width="1"/></svg>
<div class="b" style="left:854px;top:551.5px;width:73px;height:13px;background:#d6d6d6;"></div>
<div class="t" style="left:855px;top:553.2px;font-size:8px;color:#222;letter-spacing:-0.3px;">Outputs</div>
<div class="b" style="left:917px;top:559px;width:5px;height:1.5px;background:#222;"></div>
<div class="b" style="left:855px;top:566px;width:71px;height:14.5px;background:#d9e5f1;border:1px dotted #c6dcf0;"></div>
<svg style="left:858px;top:567.5px" width="12" height="12"><rect x="0.5" y="0.5" width="10" height="11" fill="#fff" stroke="#444"/><path d="M3 3v6h3" stroke="#444" fill="none"/><path d="M8 1v5M5.5 3.5h5" stroke="#20b020" stroke-width="1.5"/></svg>
<div class="t" style="left:871px;top:568.7px;font-size:8px;color:#1a1a1a;letter-spacing:-0.3px;">Add picture</div>
<div class="t" style="left:855px;top:584.6px;font-size:8px;color:#1a1a1a;letter-spacing:-0.3px;">Analysis :</div>
<div class="t" style="left:920px;top:584.6px;font-size:8px;color:#1a1a1a;letter-spacing:0px;">0</div>
<div class="t" style="left:855px;top:598.0px;font-size:8px;color:#1a1a1a;letter-spacing:-0.3px;">Total :</div>
<div class="t" style="left:920px;top:598.0px;font-size:8px;color:#1a1a1a;letter-spacing:0px;">0</div>
<div class="b" style="left:855px;top:610px;width:71px;height:14.5px;background:#d9e5f1;border:1px dotted #c6dcf0;"></div>
<svg style="left:858px;top:611.5px" width="12" height="12"><rect x="0.5" y="0.5" width="10" height="11" fill="#fff" stroke="#444"/><path d="M3 3v6h3M7 1v4M9 1v4" stroke="#444" fill="none"/></svg>
<div class="t" style="left:871px;top:612.5px;font-size:8px;color:#1a1a1a;letter-spacing:-0.3px;">List of pictures</div>
<div class="b" style="left:857px;top:629px;width:67px;height:1px;background:#c0c0c0;"></div>
<div class="b" style="left:856px;top:633px;width:33px;height:28px;background:#d9e5f1;border:1px dotted #c6dcf0;"></div>
<div class="b" style="left:892.5px;top:633px;width:33px;height:28px;background:#d9e5f1;border:1px dotted #c6dcf0;"></div>
<svg style="left:862px;top:637px" width="20" height="22"><rect x="5" y="1" width="10" height="7" fill="#fff" stroke="#333" stroke-width="0.9"/><rect x="1.5" y="6.5" width="17" height="8.5" rx="2" fill="#b39a66" stroke="#333" stroke-width="0.9"/><rect x="4.5" y="11.5" width="11" height="9" fill="#fff" stroke="#333" stroke-width="0.9"/><path d="M7 14h6M7 16h6M7 18h6" stroke="#555" stroke-width="0.9"/></svg>
<svg style="left:899px;top:637px" width="20" height="22"><rect x="5" y="1" width="10" height="7" fill="#fff" stroke="#333" stroke-width="0.9"/><rect x="1.5" y="6.5" width="17" height="8.5" rx="2" fill="#b39a66" stroke="#333" stroke-width="0.9"/><rect x="4.5" y="11.5" width="11" height="9" fill="#fff" stroke="#333" stroke-width="0.9"/><rect x="6" y="13" width="8" height="6.5" fill="#e83030"/><path d="M7 14 L13 19" stroke="#fff" stroke-width="0.9"/></svg>
<div class="b" style="left:855px;top:663.5px;width:71px;height:14px;background:#d9e5f1;border:1px dotted #c6dcf0;"></div>
<svg style="left:858px;top:665px" width="12" height="12"><rect x="0.5" y="0.5" width="8" height="9" fill="#fff" stroke="#444"/><rect x="5.5" y="6.5" width="6" height="5" fill="#eee" stroke="#444"/></svg>
<div class="t" style="left:871px;top:665.7px;font-size:8px;color:#1a1a1a;letter-spacing:-0.3px;">Copy view</div>
<div class="b" style="left:0px;top:527px;width:851px;height:155px;background:#f0f0f0;"></div>
<div class="b" style="left:0px;top:525px;width:851px;height:1px;background:#a0a0a0;"></div>
<div class="b" style="left:0px;top:526px;width:851px;height:1px;background:#fdfdfd;"></div>
<div class="b" style="left:3px;top:530px;width:13px;height:150px;background:#d4d4d4;"></div>
<div class="b" style="left:8.5px;top:535px;width:1.5px;height:4px;background:#222;"></div>
<div class="t" style="left:4.5px;top:679px;font-size:8px;color:#222;letter-spacing:-0.2px;transform-origin:0 0;transform:rotate(-90deg);line-height:10px;">Analysis</div>
<div class="t" style="left:19.6px;top:533.5px;font-size:8px;color:#1a1a1a;letter-spacing:-0.3px;">Analysis :</div>
<div class="b" style="left:55px;top:529.5px;width:16px;height:17px;background:#d9e5f1;border:1px dotted #c6dcf0;"></div>
<svg style="left:57.5px;top:532.5px" width="11" height="11"><rect x="0.5" y="0.5" width="10" height="10" rx="2.5" fill="#e8f8e8" stroke="#20a020"/><path d="M5.5 2.5v6M2.5 5.5h6" stroke="#20a020" stroke-width="1.6"/></svg>
<div class="b" style="left:74px;top:529.5px;width:16px;height:17px;background:#d9e5f1;border:1px dotted #c6dcf0;"></div>
<svg style="left:76.5px;top:532.5px" width="11" height="11"><rect x="0.5" y="0.5" width="10" height="10" rx="2.5" fill="#f8e8e8" stroke="#b03030"/><path d="M2.5 5.5h6" stroke="#b03030" stroke-width="1.6"/></svg>
<div class="t" style="left:99.5px;top:534.4px;font-size:8.2px;color:#1a1a1a;letter-spacing:0px;">[1]</div>
<div class="b" style="left:115px;top:529.5px;width:22px;height:17px;background:#c9def4;border:1px dotted #a6c8ec;"></div>
<div class="t" style="left:121px;top:534.4px;font-size:8.2px;color:#1a1a1a;letter-spacing:0px;">[2]</div>
<div class="b" style="left:21px;top:551px;width:824px;height:1px;background:#b8b8b8;"></div>
<div class="b" style="left:20.3px;top:556px;width:5.6px;height:38px;background:#00b000;"></div>
<div class="b" style="left:25.9px;top:555.3px;width:33px;height:38.7px;background:#d9e5f1;border:1px dotted #b9d2ec;"></div>
<svg style="left:31px;top:559px" width="22" height="21"><rect x="2" y="0.5" width="14" height="3" fill="#333"/><rect x="0.5" y="2.5" width="17" height="15" rx="1" fill="#333"/><rect x="3" y="5" width="11" height="9" fill="#777" stroke="#111"/><path d="M6 7 L10 9.5 L6 12 Z" fill="none" stroke="#ddd" stroke-width="0.8"/><circle cx="15.5" cy="14.5" r="5.5" fill="#1aa81a" stroke="#fff" stroke-width="1"/><path d="M13.5 11.5 L18.5 14.5 L13.5 17.5 Z" fill="#fff"/></svg>
<div class="t" style="left:29.5px;top:582.7px;font-size:8px;color:#1a1a1a;letter-spacing:-0.3px;">Analyze</div>
<div class="t" style="left:70.7px;top:558.2px;font-size:8px;color:#1a1a1a;letter-spacing:-0.3px;">Slip surface :</div>
<div class="b" style="left:116.8px;top:556px;width:45.6px;height:14px;background:#fff;"></div>
<div class="t" style="left:118.5px;top:558.2px;font-size:8px;color:#1a1a1a;letter-spacing:-0.3px;">polygonal</div>
<svg style="left:153px;top:561px" width="6" height="4"><path d="M0 0H6L3 3.5Z" fill="#111"/></svg>
<div class="b" style="left:167px;top:555.3px;width:44.69999999999999px;height:14.5px;background:#d9e5f1;border:1px dotted #c6dcf0;"></div>
<svg style="left:170px;top:557px" width="11" height="11"><path d="M2 5 A4 4 0 0 1 9 3" fill="none" stroke="#e02020" stroke-width="1.8"/><path d="M9 6 A4 4 0 0 1 2 8" fill="none" stroke="#20a020" stroke-width="1.8"/><path d="M7 0.5 L10.5 1 L10 5 Z" fill="#e02020"/><path d="M4 10.5 L0.5 10 L1 6 Z" fill="#20a020"/></svg>
<div class="t" style="left:182px;top:558.6px;font-size:8px;color:#1a1a1a;letter-spacing:-0.3px;">Replace</div>
<div class="b" style="left:216px;top:555.3px;width:31.599999999999994px;height:14.5px;background:#d9e5f1;border:1px dotted #c6dcf0;"></div>
<svg style="left:219px;top:557px" width="11" height="12"><path d="M2 9 L8 1" stroke="#20a020" stroke-width="1.8"/><path d="M0 11h6" stroke="#333" stroke-width="0.8"/></svg>
<div class="t" style="left:231px;top:558.6px;font-size:8px;color:#1a1a1a;letter-spacing:-0.3px;">Edit</div>
<div class="b" style="left:251.6px;top:555.3px;width:45.400000000000006px;height:14.5px;background:#d9e5f1;border:1px dotted #c6dcf0;"></div>
<svg style="left:255px;top:557px" width="11" height="12"><path d="M1.5 1.5 L9 9 M9 1.5 L1.5 9" stroke="#e01818" stroke-width="1.8"/><path d="M0 11h7" stroke="#333" stroke-width="0.8"/></svg>
<div class="t" style="left:266px;top:558.6px;font-size:8px;color:#1a1a1a;letter-spacing:-0.3px;">Remove</div>
<div class="b" style="left:301.6px;top:555.3px;width:72.39999999999998px;height:14.5px;background:#d9e5f1;border:1px dotted #c6dcf0;"></div>
<svg style="left:304px;top:557px" width="11" height="11"><path d="M3 1.5 H1.5 V9.5 H3 M8 1.5 H9.5 V9.5 H8" fill="none" stroke="#333" stroke-width="1.2"/><path d="M4 2 L6 1 M7 9 L5 10" stroke="#333"/></svg>
<div class="t" style="left:316.5px;top:558.6px;font-size:8px;color:#1a1a1a;letter-spacing:-0.3px;">Convert to circle</div>
<div class="b" style="left:71px;top:579.5px;width:5.5px;height:1px;background:#c8c8c8;"></div>
<div class="t" style="left:77.7px;top:574.9px;font-size:8px;color:#1a1a1a;letter-spacing:-0.3px;">Parameters of the analysis</div>
<div class="b" style="left:166.3px;top:579.5px;width:40px;height:1px;background:#c8c8c8;"></div>
<div class="b" style="left:217px;top:579.5px;width:5.5px;height:1px;background:#c8c8c8;"></div>
<div class="t" style="left:223.6px;top:575.2px;font-size:8px;color:#1a1a1a;letter-spacing:-0.3px;">Polygonal slip surface</div>
<div class="b" style="left:295px;top:579.5px;width:68px;height:1px;background:#c8c8c8;"></div>
<div class="t" style="left:70.7px;top:591.2px;font-size:8px;color:#1a1a1a;letter-spacing:-0.3px;">Method :</div>
<div class="b" style="left:122.8px;top:588.7px;width:84px;height:14px;background:#fff;border:1px solid #adadad;"></div>
<div class="t" style="left:125px;top:590.7px;font-size:8px;color:#1a1a1a;letter-spacing:-0.3px;">[all methods]</div>
<div class="b" style="left:194.2px;top:591.3px;width:10px;height:9.5px;background:#e6e6e6;border:1px solid #c8c8c8;"></div>
<svg style="left:196.5px;top:594.5px" width="6" height="4"><path d="M0 0H6L3 3.5Z" fill="#111"/></svg>
<div class="t" style="left:70.7px;top:609.7px;font-size:8px;color:#1a1a1a;letter-spacing:-0.3px;">Analysis type :</div>
<div class="b" style="left:122.8px;top:607.6px;width:84px;height:14px;background:#efefef;border:1px solid #c8c8c8;"></div>
<div class="t" style="left:125px;top:609.7px;font-size:8px;color:#1a1a1a;letter-spacing:-0.3px;">Standard</div>
<div class="b" style="left:194.2px;top:610.2px;width:10px;height:9.5px;background:#dcdcdc;border:1px solid #d0d0d0;"></div>
<svg style="left:196.5px;top:613.5px" width="6" height="4"><path d="M0 0H6L3 3.5Z" fill="#aaa"/></svg>
<div class="b" style="left:71.2px;top:627.4px;width:8px;height:8px;background:#fff;border:1px solid #555;"></div>
<div class="t" style="left:82.9px;top:626.6px;font-size:8px;color:#1a1a1a;letter-spacing:-0.42px;">Assume anchors as infinite</div>
<div class="b" style="left:216.6px;top:588.4px;width:146px;height:90.4px;background:#fff;border:1px solid #5a5a5a;"></div>
<div class="b" style="left:217.6px;top:589.4px;width:132px;height:10.6px;background:#f0f0f0;"></div>
<div style="position:absolute;left:217.6px;top:600px;width:132px;height:77.4px;overflow:hidden;">
<div class="b" style="left:0;top:0.0px;width:33.6px;height:12.3px;background:#d3d3d3;border-bottom:1px solid #e4e4e4;"></div>
<div class="b" style="left:33.6px;top:0.0px;width:100px;height:12.3px;border-bottom:1px solid #d8d8d8;"></div>
<div class="b" style="left:0;top:12.3px;width:33.6px;height:12.3px;background:#d3d3d3;border-bottom:1px solid #e4e4e4;"></div>
<div class="b" style="left:33.6px;top:12.3px;width:100px;height:12.3px;border-bottom:1px solid #d8d8d8;"></div>
<div class="b" style="left:0;top:24.6px;width:33.6px;height:12.3px;background:#d3d3d3;border-bottom:1px solid #e4e4e4;"></div>
<div class="b" style="left:33.6px;top:24.6px;width:100px;height:12.3px;border-bottom:1px solid #d8d8d8;"></div>
<div class="b" style="left:0;top:36.9px;width:33.6px;height:12.3px;background:#d3d3d3;border-bottom:1px solid #e4e4e4;"></div>
<div class="b" style="left:33.6px;top:36.9px;width:100px;height:12.3px;border-bottom:1px solid #d8d8d8;"></div>
<div class="b" style="left:0;top:49.2px;width:33.6px;height:12.3px;background:#d3d3d3;border-bottom:1px solid #e4e4e4;"></div>
<div class="b" style="left:33.6px;top:49.2px;width:100px;height:12.3px;border-bottom:1px solid #d8d8d8;"></div>
<div class="b" style="left:0;top:61.5px;width:33.6px;height:12.3px;background:#d3d3d3;border-bottom:1px solid #e4e4e4;"></div>
<div class="b" style="left:33.6px;top:61.5px;width:100px;height:12.3px;border-bottom:1px solid #d8d8d8;"></div>
<div class="b" style="left:0;top:73.8px;width:33.6px;height:12.3px;background:#d3d3d3;border-bottom:1px solid #e4e4e4;"></div>
<div class="b" style="left:33.6px;top:73.8px;width:100px;height:12.3px;border-bottom:1px solid #d8d8d8;"></div>
<div class="t" style="left:0;top:2.4px;width:31px;text-align:right;font-size:8.3px;color:#8a8a8a;">1</div>
<div class="t" style="left:34px;top:2.4px;width:47px;text-align:right;font-size:8.3px;color:#1a1a1a;letter-spacing:-0.1px;">13,25</div>
<div class="t" style="left:83px;top:2.4px;width:48px;text-align:right;font-size:8.3px;color:#1a1a1a;letter-spacing:-0.1px;">117,19</div>
<div class="t" style="left:0;top:14.6px;width:31px;text-align:right;font-size:8.3px;color:#8a8a8a;">2</div>
<div class="t" style="left:34px;top:14.6px;width:47px;text-align:right;font-size:8.3px;color:#1a1a1a;letter-spacing:-0.1px;">17,12</div>
<div class="t" style="left:83px;top:14.6px;width:48px;text-align:right;font-size:8.3px;color:#1a1a1a;letter-spacing:-0.1px;">116,28</div>
<div class="t" style="left:0;top:26.8px;width:31px;text-align:right;font-size:8.3px;color:#8a8a8a;">3</div>
<div class="t" style="left:34px;top:26.8px;width:47px;text-align:right;font-size:8.3px;color:#1a1a1a;letter-spacing:-0.1px;">22,53</div>
<div class="t" style="left:83px;top:26.8px;width:48px;text-align:right;font-size:8.3px;color:#1a1a1a;letter-spacing:-0.1px;">117,39</div>
<div class="t" style="left:0;top:39.0px;width:31px;text-align:right;font-size:8.3px;color:#8a8a8a;">4</div>
<div class="t" style="left:34px;top:39.0px;width:47px;text-align:right;font-size:8.3px;color:#1a1a1a;letter-spacing:-0.1px;">28,39</div>
<div class="t" style="left:83px;top:39.0px;width:48px;text-align:right;font-size:8.3px;color:#1a1a1a;letter-spacing:-0.1px;">118,29</div>
<div class="t" style="left:0;top:51.2px;width:31px;text-align:right;font-size:8.3px;color:#8a8a8a;">5</div>
<div class="t" style="left:34px;top:51.2px;width:47px;text-align:right;font-size:8.3px;color:#1a1a1a;letter-spacing:-0.1px;">32,99</div>
<div class="t" style="left:83px;top:51.2px;width:48px;text-align:right;font-size:8.3px;color:#1a1a1a;letter-spacing:-0.1px;">120,29</div>
<div class="t" style="left:0;top:63.4px;width:31px;text-align:right;font-size:8.3px;color:#8a8a8a;">6</div>
<div class="t" style="left:34px;top:63.4px;width:47px;text-align:right;font-size:8.3px;color:#1a1a1a;letter-spacing:-0.1px;">36,90</div>
<div class="t" style="left:83px;top:63.4px;width:48px;text-align:right;font-size:8.3px;color:#1a1a1a;letter-spacing:-0.1px;">121,86</div>
<div class="t" style="left:0;top:75.6px;width:31px;text-align:right;font-size:8.3px;color:#8a8a8a;">7</div>
<div class="t" style="left:34px;top:75.6px;width:47px;text-align:right;font-size:8.3px;color:#1a1a1a;letter-spacing:-0.1px;">40,00</div>
<div class="t" style="left:83px;top:75.6px;width:48px;text-align:right;font-size:8.3px;color:#1a1a1a;letter-spacing:-0.1px;">123,00</div>
</div>
<div class="b" style="left:251px;top:589.4px;width:1.6px;height:88px;background:#555;"></div>
<div class="b" style="left:300.3px;top:589.4px;width:1px;height:88px;background:#c8c8c8;"></div>
<div class="b" style="left:349px;top:589.4px;width:1.6px;height:88px;background:#555;"></div>
<div class="b" style="left:217.6px;top:599.3px;width:132px;height:1.6px;background:#555;"></div>
<div class="t" style="left:217.6px;top:589.6px;width:33.4px;text-align:center;font-size:8.3px;color:#1a1a1a;letter-spacing:-0.2px;">No.</div>
<div class="t" style="left:252.6px;top:589.6px;width:47.7px;text-align:center;font-size:8.3px;color:#1a1a1a;letter-spacing:-0.2px;">x [m]</div>
<div class="t" style="left:301.3px;top:589.6px;width:47.7px;text-align:center;font-size:8.3px;color:#1a1a1a;letter-spacing:-0.2px;">z [m]</div>
<svg style="left:227px;top:603.5px" width="5" height="7"><path d="M1 1 L4 3.5 L1 6" fill="none" stroke="#999"/></svg>
<div class="b" style="left:350.6px;top:589.4px;width:11px;height:88px;background:#f0f0f0;"></div>
<div class="b" style="left:351.6px;top:612px;width:8.8px;height:41px;background:#cdcdcd;"></div>
<svg style="left:352.5px;top:604.5px" width="8" height="5"><path d="M1 4 L4 1 L7 4" fill="none" stroke="#333"/></svg>
<svg style="left:352.5px;top:669px" width="8" height="5"><path d="M1 1 L4 4 L7 1" fill="none" stroke="#333"/></svg>
<div class="b" style="left:371.8px;top:574.8px;width:465px;height:104px;background:#fff;"></div>
<div class="b" style="left:778px;top:556px;width:69px;height:13.5px;background:#d9e5f1;border:1px dotted #c6dcf0;"></div>
<svg style="left:781px;top:557.5px" width="10" height="10"><rect x="0.5" y="0.5" width="9" height="9" fill="#e0f4e0" stroke="#20a020"/><path d="M6 1.5 L3 5 H6 L3.5 8.5" fill="none" stroke="#108010" stroke-width="1.2"/></svg>
<div class="t" style="left:793px;top:558.0px;font-size:8px;color:#1a1a1a;letter-spacing:-0.3px;">Detailed results</div>
<svg style="left:837px;top:578px" width="9" height="100"><path d="M1 5 L4.5 2 L8 5" fill="none" stroke="#bbb"/><path d="M1 93 L4.5 96 L8 93" fill="none" stroke="#bbb"/></svg>
<div class="t" style="left:377.9px;top:577.5px;font-size:8px;color:#000;letter-spacing:-0.02px;font-weight:bold;">Slope stability verification (all methods)</div>
<div class="t" style="left:377.9px;top:586.4px;font-size:8px;color:#1a1a1a;letter-spacing:-0.3px;">Sarma :</div>
<div class="t" style="left:452.7px;top:586.4px;font-size:8px;color:#1a1a1a;letter-spacing:-0.2px;">FS = 1,94 &gt; 1,50</div>
<div class="t" style="left:512.6px;top:586.4px;font-size:8px;color:#18b018;letter-spacing:-0.95px;">ACCEPTABLE</div>
<div class="t" style="left:558px;top:586.4px;font-size:8px;color:#b07c22;letter-spacing:-0.3px;">One of the dividing planes cuts through the rigid body. The results can be</div>
<div class="t" style="left:558px;top:595.1px;font-size:8px;color:#b07c22;letter-spacing:-0.3px;">overestimated.</div>
<div class="t" style="left:377.9px;top:603.9px;font-size:8px;color:#1a1a1a;letter-spacing:-0.3px;">Spencer :</div>
<div class="t" style="left:452.7px;top:603.9px;font-size:8px;color:#1a1a1a;letter-spacing:-0.2px;">FS = 1,93 &gt; 1,50</div>
<div class="t" style="left:512.6px;top:603.9px;font-size:8px;color:#18b018;letter-spacing:-0.95px;">ACCEPTABLE</div>
<div class="t" style="left:377.9px;top:612.6px;font-size:8px;color:#1a1a1a;letter-spacing:-0.3px;">Janbu :</div>
<div class="t" style="left:452.7px;top:612.6px;font-size:8px;color:#1a1a1a;letter-spacing:-0.2px;">FS = 1,95 &gt; 1,50</div>
<div class="t" style="left:512.6px;top:612.6px;font-size:8px;color:#18b018;letter-spacing:-0.95px;">ACCEPTABLE</div>
<div class="t" style="left:377.9px;top:621.3px;font-size:8px;color:#1a1a1a;letter-spacing:-0.3px;">Morgenstern-Price :</div>
<div class="t" style="left:452.7px;top:621.3px;font-size:8px;color:#1a1a1a;letter-spacing:-0.2px;">FS = 1,91 &gt; 1,50</div>
<div class="t" style="left:512.6px;top:621.3px;font-size:8px;color:#18b018;letter-spacing:-0.95px;">ACCEPTABLE</div>
<div class="t" style="left:377.9px;top:630.0px;font-size:8px;color:#1a1a1a;letter-spacing:-0.3px;">Shachunyanc :</div>
<div class="t" style="left:452.7px;top:630.0px;font-size:8px;color:#1a1a1a;letter-spacing:-0.2px;">FS = 1,91 &gt; 1,50</div>
<div class="t" style="left:512.6px;top:630.0px;font-size:8px;color:#18b018;letter-spacing:-0.95px;">ACCEPTABLE</div>
<div class="t" style="left:377.9px;top:638.7px;font-size:8px;color:#1a1a1a;letter-spacing:-0.3px;">ITFM :</div>
<div class="t" style="left:452.7px;top:638.7px;font-size:8px;color:#1a1a1a;letter-spacing:-0.2px;">FS = 2,11 &gt; 1,50</div>
<div class="t" style="left:512.6px;top:638.7px;font-size:8px;color:#18b018;letter-spacing:-0.95px;">ACCEPTABLE</div>
<div class="t" style="left:558px;top:638.7px;font-size:8px;color:#b07c22;letter-spacing:-0.36px;">The increments of slip segment obliqueness is higher than 10 degrees. The results</div>
<div class="t" style="left:558px;top:647.4px;font-size:8px;color:#b07c22;letter-spacing:-0.3px;">can be overestimated.</div>
<div class="t" style="left:377.9px;top:656.1px;font-size:8px;color:#1a1a1a;letter-spacing:-0.3px;">ITFM explicit solution :</div>
<div class="t" style="left:452.7px;top:656.1px;font-size:8px;color:#1a1a1a;letter-spacing:-0.2px;">FS = 1,98 &gt; 1,50</div>
<div class="t" style="left:512.6px;top:656.1px;font-size:8px;color:#18b018;letter-spacing:-0.95px;">ACCEPTABLE</div>
<div class="t" style="left:558px;top:656.1px;font-size:8px;color:#b07c22;letter-spacing:-0.36px;">The increments of slip segment obliqueness is higher than 10 degrees. The results</div>
<div class="t" style="left:558px;top:664.8px;font-size:8px;color:#b07c22;letter-spacing:-0.3px;">can be overestimated.</div>
<div class="b" style="left:0px;top:682px;width:930px;height:1px;background:#d8d8d8;"></div>
<div class="b" style="left:0px;top:683px;width:930px;height:17px;background:#f0f0f0;"></div>
<div class="b" style="left:0px;top:699px;width:930px;height:1px;background:#a0a0a0;"></div>
<svg style="left:918px;top:687px" width="11" height="11"><g fill="#a8a8a8"><rect x="8" y="2" width="1.2" height="1.2"/><rect x="5" y="5" width="1.2" height="1.2"/><rect x="8" y="5" width="1.2" height="1.2"/><rect x="2" y="8" width="1.2" height="1.2"/><rect x="5" y="8" width="1.2" height="1.2"/><rect x="8" y="8" width="1.2" height="1.2"/></g></svg>
<div class="b" style="left:0px;top:0px;width:1px;height:700px;background:#a8a8a8;"></div>
<div class="b" style="left:929px;top:0px;width:1px;height:700px;background:#a8a8a8;"></div>
</body></html>
